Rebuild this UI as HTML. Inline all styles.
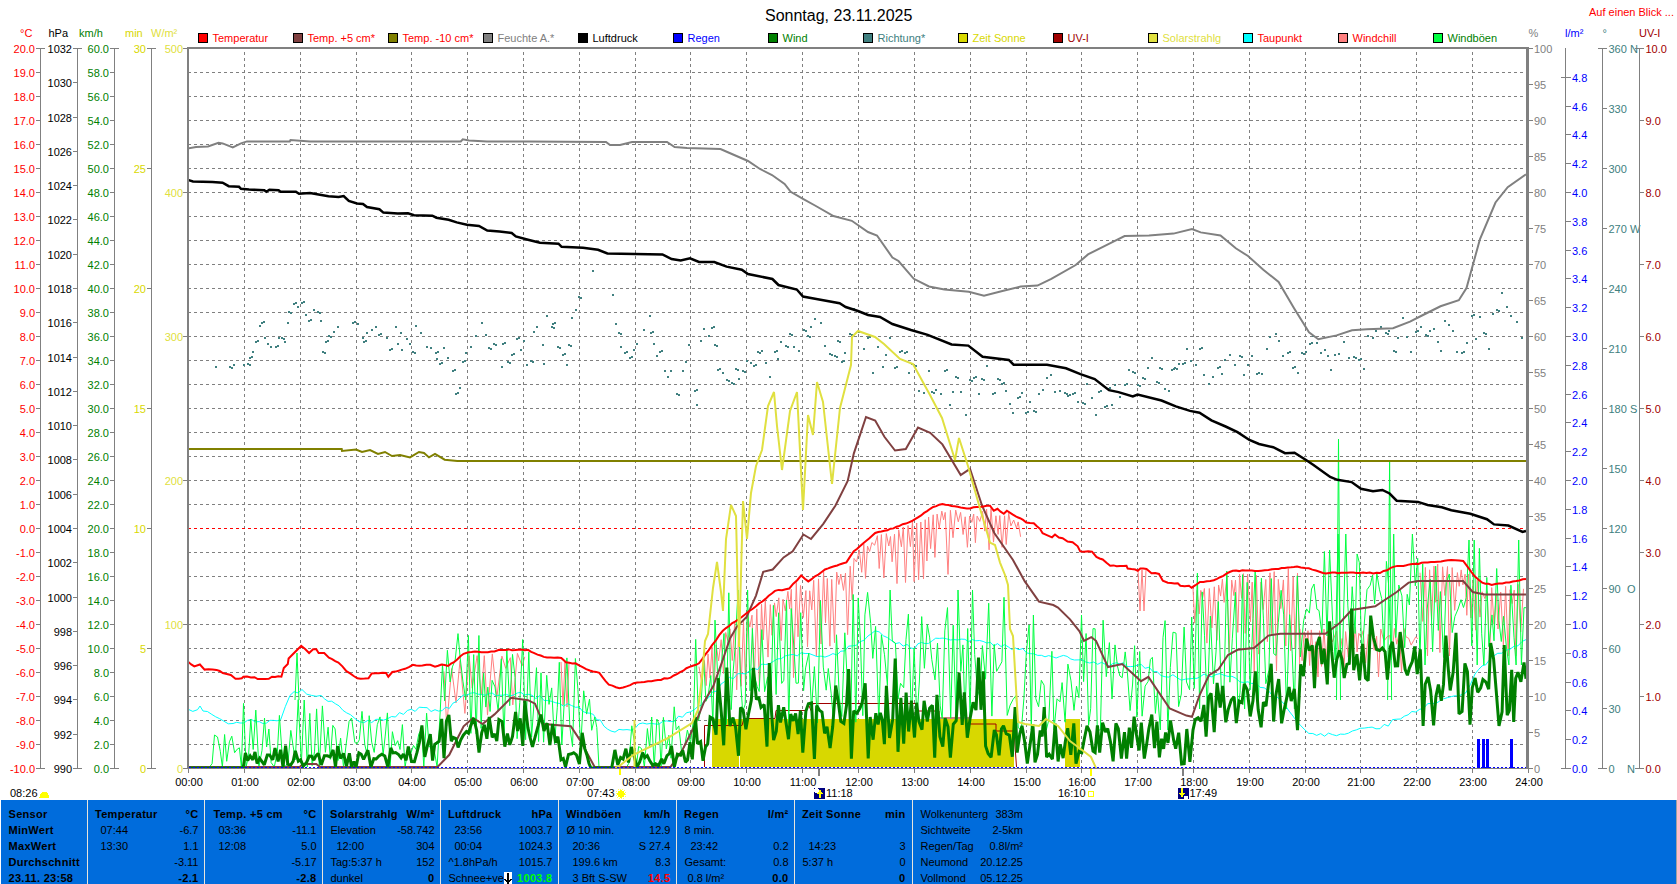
<!DOCTYPE html>
<html><head><meta charset="utf-8"><style>
html,body{margin:0;padding:0;background:#fff;width:1677px;height:884px;overflow:hidden}
svg{display:block}
text{font-family:"Liberation Sans",sans-serif;font-size:11px}
</style></head><body>
<svg width="1677" height="884" viewBox="0 0 1677 884" shape-rendering="crispEdges">
<g><text x="765" y="21" fill="#000" style="font-size:16px">Sonntag, 23.11.2025</text>
<text x="1589" y="16" fill="#FF0000">Auf einen Blick ...</text>
<rect x="198.5" y="33.5" width="9" height="9" fill="#FF0000" stroke="#000" stroke-width="1"/>
<text x="212.5" y="42" fill="#FF0000">Temperatur</text>
<rect x="293.5" y="33.5" width="9" height="9" fill="#804040" stroke="#000" stroke-width="1"/>
<text x="307.5" y="42" fill="#FF0000">Temp. +5 cm*</text>
<rect x="388.5" y="33.5" width="9" height="9" fill="#808000" stroke="#000" stroke-width="1"/>
<text x="402.5" y="42" fill="#FF0000">Temp. -10 cm*</text>
<rect x="483.5" y="33.5" width="9" height="9" fill="#808080" stroke="#000" stroke-width="1"/>
<text x="497.5" y="42" fill="#808080">Feuchte A.*</text>
<rect x="578.5" y="33.5" width="9" height="9" fill="#000000" stroke="#000" stroke-width="1"/>
<text x="592.5" y="42" fill="#000000">Luftdruck</text>
<rect x="673.5" y="33.5" width="9" height="9" fill="#0000FF" stroke="#000" stroke-width="1"/>
<text x="687.5" y="42" fill="#0000FF">Regen</text>
<rect x="768.5" y="33.5" width="9" height="9" fill="#008000" stroke="#000" stroke-width="1"/>
<text x="782.5" y="42" fill="#008000">Wind</text>
<rect x="863.5" y="33.5" width="9" height="9" fill="#408080" stroke="#000" stroke-width="1"/>
<text x="877.5" y="42" fill="#408080">Richtung*</text>
<rect x="958.5" y="33.5" width="9" height="9" fill="#D8D800" stroke="#000" stroke-width="1"/>
<text x="972.5" y="42" fill="#D8D800">Zeit Sonne</text>
<rect x="1053.5" y="33.5" width="9" height="9" fill="#A00000" stroke="#000" stroke-width="1"/>
<text x="1067.5" y="42" fill="#A00000">UV-I</text>
<rect x="1148.5" y="33.5" width="9" height="9" fill="#E0E040" stroke="#000" stroke-width="1"/>
<text x="1162.5" y="42" fill="#E0E040">Solarstrahlg</text>
<rect x="1243.5" y="33.5" width="9" height="9" fill="#00FFFF" stroke="#000" stroke-width="1"/>
<text x="1257.5" y="42" fill="#FF0000">Taupunkt</text>
<rect x="1338.5" y="33.5" width="9" height="9" fill="#FF8080" stroke="#000" stroke-width="1"/>
<text x="1352.5" y="42" fill="#FF0000">Windchill</text>
<rect x="1433.5" y="33.5" width="9" height="9" fill="#00FF40" stroke="#000" stroke-width="1"/>
<text x="1447.5" y="42" fill="#008000">Windböen</text>
<text x="20" y="37" fill="#FF0000">°C</text>
<text x="48.5" y="37" fill="#000">hPa</text>
<text x="79" y="37" fill="#008000">km/h</text>
<text x="125" y="37" fill="#D8D800">min</text>
<text x="151" y="37" fill="#E0E040">W/m²</text>
<text x="1528.5" y="37" fill="#808080">%</text>
<text x="1565" y="37" fill="#0000FF">l/m²</text>
<text x="1602.5" y="37" fill="#408080">°</text>
<text x="1639" y="37" fill="#A00000">UV-I</text>
<path d="M188 72.5H1526M188 96.5H1526M188 120.5H1526M188 144.5H1526M188 168.5H1526M188 192.5H1526M188 216.5H1526M188 240.5H1526M188 264.5H1526M188 288.5H1526M188 312.5H1526M188 336.5H1526M188 360.5H1526M188 384.5H1526M188 408.5H1526M188 432.5H1526M188 456.5H1526M188 480.5H1526M188 504.5H1526M188 528.5H1526M188 552.5H1526M188 576.5H1526M188 600.5H1526M188 624.5H1526M188 648.5H1526M188 672.5H1526M188 696.5H1526M188 720.5H1526M188 744.5H1526" stroke="#808080" stroke-width="1" stroke-dasharray="3 3" fill="none"/>
<path d="M244.5 52V767M300.5 52V767M356.5 52V767M411.5 52V767M467.5 52V767M523.5 52V767M579.5 52V767M635.5 52V767M690.5 52V767M746.5 52V767M802.5 52V767M858.5 52V767M914.5 52V767M970.5 52V767M1026.5 52V767M1081.5 52V767M1137.5 52V767M1193.5 52V767M1249.5 52V767M1305.5 52V767M1360.5 52V767M1416.5 52V767M1472.5 52V767" stroke="#808080" stroke-width="1" stroke-dasharray="3 3" fill="none"/>
<path d="M188 528.5H1526" stroke="#FF0000" stroke-width="1" stroke-dasharray="3 3" fill="none"/>
<line x1="40.5" y1="48" x2="40.5" y2="769" stroke="#808080" stroke-width="1"/>
<line x1="36" y1="48.5" x2="45" y2="48.5" stroke="#808080" stroke-width="1"/>
<text x="35" y="53" fill="#FF0000" text-anchor="end">20.0</text>
<line x1="36" y1="72.5" x2="41" y2="72.5" stroke="#808080" stroke-width="1"/>
<text x="35" y="77" fill="#FF0000" text-anchor="end">19.0</text>
<line x1="36" y1="96.5" x2="41" y2="96.5" stroke="#808080" stroke-width="1"/>
<text x="35" y="101" fill="#FF0000" text-anchor="end">18.0</text>
<line x1="36" y1="120.5" x2="41" y2="120.5" stroke="#808080" stroke-width="1"/>
<text x="35" y="125" fill="#FF0000" text-anchor="end">17.0</text>
<line x1="36" y1="144.5" x2="41" y2="144.5" stroke="#808080" stroke-width="1"/>
<text x="35" y="149" fill="#FF0000" text-anchor="end">16.0</text>
<line x1="36" y1="168.5" x2="41" y2="168.5" stroke="#808080" stroke-width="1"/>
<text x="35" y="173" fill="#FF0000" text-anchor="end">15.0</text>
<line x1="36" y1="192.5" x2="41" y2="192.5" stroke="#808080" stroke-width="1"/>
<text x="35" y="197" fill="#FF0000" text-anchor="end">14.0</text>
<line x1="36" y1="216.5" x2="41" y2="216.5" stroke="#808080" stroke-width="1"/>
<text x="35" y="221" fill="#FF0000" text-anchor="end">13.0</text>
<line x1="36" y1="240.5" x2="41" y2="240.5" stroke="#808080" stroke-width="1"/>
<text x="35" y="245" fill="#FF0000" text-anchor="end">12.0</text>
<line x1="36" y1="264.5" x2="41" y2="264.5" stroke="#808080" stroke-width="1"/>
<text x="35" y="269" fill="#FF0000" text-anchor="end">11.0</text>
<line x1="36" y1="288.5" x2="41" y2="288.5" stroke="#808080" stroke-width="1"/>
<text x="35" y="293" fill="#FF0000" text-anchor="end">10.0</text>
<line x1="36" y1="312.5" x2="41" y2="312.5" stroke="#808080" stroke-width="1"/>
<text x="35" y="317" fill="#FF0000" text-anchor="end">9.0</text>
<line x1="36" y1="336.5" x2="41" y2="336.5" stroke="#808080" stroke-width="1"/>
<text x="35" y="341" fill="#FF0000" text-anchor="end">8.0</text>
<line x1="36" y1="360.5" x2="41" y2="360.5" stroke="#808080" stroke-width="1"/>
<text x="35" y="365" fill="#FF0000" text-anchor="end">7.0</text>
<line x1="36" y1="384.5" x2="41" y2="384.5" stroke="#808080" stroke-width="1"/>
<text x="35" y="389" fill="#FF0000" text-anchor="end">6.0</text>
<line x1="36" y1="408.5" x2="41" y2="408.5" stroke="#808080" stroke-width="1"/>
<text x="35" y="413" fill="#FF0000" text-anchor="end">5.0</text>
<line x1="36" y1="432.5" x2="41" y2="432.5" stroke="#808080" stroke-width="1"/>
<text x="35" y="437" fill="#FF0000" text-anchor="end">4.0</text>
<line x1="36" y1="456.5" x2="41" y2="456.5" stroke="#808080" stroke-width="1"/>
<text x="35" y="461" fill="#FF0000" text-anchor="end">3.0</text>
<line x1="36" y1="480.5" x2="41" y2="480.5" stroke="#808080" stroke-width="1"/>
<text x="35" y="485" fill="#FF0000" text-anchor="end">2.0</text>
<line x1="36" y1="504.5" x2="41" y2="504.5" stroke="#808080" stroke-width="1"/>
<text x="35" y="509" fill="#FF0000" text-anchor="end">1.0</text>
<line x1="36" y1="528.5" x2="41" y2="528.5" stroke="#808080" stroke-width="1"/>
<text x="35" y="533" fill="#FF0000" text-anchor="end">0.0</text>
<line x1="36" y1="552.5" x2="41" y2="552.5" stroke="#808080" stroke-width="1"/>
<text x="35" y="557" fill="#FF0000" text-anchor="end">-1.0</text>
<line x1="36" y1="576.5" x2="41" y2="576.5" stroke="#808080" stroke-width="1"/>
<text x="35" y="581" fill="#FF0000" text-anchor="end">-2.0</text>
<line x1="36" y1="600.5" x2="41" y2="600.5" stroke="#808080" stroke-width="1"/>
<text x="35" y="605" fill="#FF0000" text-anchor="end">-3.0</text>
<line x1="36" y1="624.5" x2="41" y2="624.5" stroke="#808080" stroke-width="1"/>
<text x="35" y="629" fill="#FF0000" text-anchor="end">-4.0</text>
<line x1="36" y1="648.5" x2="41" y2="648.5" stroke="#808080" stroke-width="1"/>
<text x="35" y="653" fill="#FF0000" text-anchor="end">-5.0</text>
<line x1="36" y1="672.5" x2="41" y2="672.5" stroke="#808080" stroke-width="1"/>
<text x="35" y="677" fill="#FF0000" text-anchor="end">-6.0</text>
<line x1="36" y1="696.5" x2="41" y2="696.5" stroke="#808080" stroke-width="1"/>
<text x="35" y="701" fill="#FF0000" text-anchor="end">-7.0</text>
<line x1="36" y1="720.5" x2="41" y2="720.5" stroke="#808080" stroke-width="1"/>
<text x="35" y="725" fill="#FF0000" text-anchor="end">-8.0</text>
<line x1="36" y1="744.5" x2="41" y2="744.5" stroke="#808080" stroke-width="1"/>
<text x="35" y="749" fill="#FF0000" text-anchor="end">-9.0</text>
<line x1="36" y1="768.5" x2="45" y2="768.5" stroke="#808080" stroke-width="1"/>
<text x="35" y="773" fill="#FF0000" text-anchor="end">-10.0</text>
<line x1="77.5" y1="48" x2="77.5" y2="769" stroke="#808080" stroke-width="1"/>
<line x1="73" y1="48.5" x2="82" y2="48.5" stroke="#808080" stroke-width="1"/>
<text x="72" y="53" fill="#000000" text-anchor="end">1032</text>
<line x1="73" y1="82.5" x2="78" y2="82.5" stroke="#808080" stroke-width="1"/>
<text x="72" y="87" fill="#000000" text-anchor="end">1030</text>
<line x1="73" y1="117.5" x2="78" y2="117.5" stroke="#808080" stroke-width="1"/>
<text x="72" y="122" fill="#000000" text-anchor="end">1028</text>
<line x1="73" y1="151.5" x2="78" y2="151.5" stroke="#808080" stroke-width="1"/>
<text x="72" y="156" fill="#000000" text-anchor="end">1026</text>
<line x1="73" y1="185.5" x2="78" y2="185.5" stroke="#808080" stroke-width="1"/>
<text x="72" y="190" fill="#000000" text-anchor="end">1024</text>
<line x1="73" y1="219.5" x2="78" y2="219.5" stroke="#808080" stroke-width="1"/>
<text x="72" y="224" fill="#000000" text-anchor="end">1022</text>
<line x1="73" y1="254.5" x2="78" y2="254.5" stroke="#808080" stroke-width="1"/>
<text x="72" y="259" fill="#000000" text-anchor="end">1020</text>
<line x1="73" y1="288.5" x2="78" y2="288.5" stroke="#808080" stroke-width="1"/>
<text x="72" y="293" fill="#000000" text-anchor="end">1018</text>
<line x1="73" y1="322.5" x2="78" y2="322.5" stroke="#808080" stroke-width="1"/>
<text x="72" y="327" fill="#000000" text-anchor="end">1016</text>
<line x1="73" y1="357.5" x2="78" y2="357.5" stroke="#808080" stroke-width="1"/>
<text x="72" y="362" fill="#000000" text-anchor="end">1014</text>
<line x1="73" y1="391.5" x2="78" y2="391.5" stroke="#808080" stroke-width="1"/>
<text x="72" y="396" fill="#000000" text-anchor="end">1012</text>
<line x1="73" y1="425.5" x2="78" y2="425.5" stroke="#808080" stroke-width="1"/>
<text x="72" y="430" fill="#000000" text-anchor="end">1010</text>
<line x1="73" y1="459.5" x2="78" y2="459.5" stroke="#808080" stroke-width="1"/>
<text x="72" y="464" fill="#000000" text-anchor="end">1008</text>
<line x1="73" y1="494.5" x2="78" y2="494.5" stroke="#808080" stroke-width="1"/>
<text x="72" y="499" fill="#000000" text-anchor="end">1006</text>
<line x1="73" y1="528.5" x2="78" y2="528.5" stroke="#808080" stroke-width="1"/>
<text x="72" y="533" fill="#000000" text-anchor="end">1004</text>
<line x1="73" y1="562.5" x2="78" y2="562.5" stroke="#808080" stroke-width="1"/>
<text x="72" y="567" fill="#000000" text-anchor="end">1002</text>
<line x1="73" y1="597.5" x2="78" y2="597.5" stroke="#808080" stroke-width="1"/>
<text x="72" y="602" fill="#000000" text-anchor="end">1000</text>
<line x1="73" y1="631.5" x2="78" y2="631.5" stroke="#808080" stroke-width="1"/>
<text x="72" y="636" fill="#000000" text-anchor="end">998</text>
<line x1="73" y1="665.5" x2="78" y2="665.5" stroke="#808080" stroke-width="1"/>
<text x="72" y="670" fill="#000000" text-anchor="end">996</text>
<line x1="73" y1="699.5" x2="78" y2="699.5" stroke="#808080" stroke-width="1"/>
<text x="72" y="704" fill="#000000" text-anchor="end">994</text>
<line x1="73" y1="734.5" x2="78" y2="734.5" stroke="#808080" stroke-width="1"/>
<text x="72" y="739" fill="#000000" text-anchor="end">992</text>
<line x1="73" y1="768.5" x2="82" y2="768.5" stroke="#808080" stroke-width="1"/>
<text x="72" y="773" fill="#000000" text-anchor="end">990</text>
<line x1="114.5" y1="48" x2="114.5" y2="769" stroke="#808080" stroke-width="1"/>
<line x1="110" y1="48.5" x2="119" y2="48.5" stroke="#808080" stroke-width="1"/>
<text x="109" y="53" fill="#008000" text-anchor="end">60.0</text>
<line x1="110" y1="72.5" x2="115" y2="72.5" stroke="#808080" stroke-width="1"/>
<text x="109" y="77" fill="#008000" text-anchor="end">58.0</text>
<line x1="110" y1="96.5" x2="115" y2="96.5" stroke="#808080" stroke-width="1"/>
<text x="109" y="101" fill="#008000" text-anchor="end">56.0</text>
<line x1="110" y1="120.5" x2="115" y2="120.5" stroke="#808080" stroke-width="1"/>
<text x="109" y="125" fill="#008000" text-anchor="end">54.0</text>
<line x1="110" y1="144.5" x2="115" y2="144.5" stroke="#808080" stroke-width="1"/>
<text x="109" y="149" fill="#008000" text-anchor="end">52.0</text>
<line x1="110" y1="168.5" x2="115" y2="168.5" stroke="#808080" stroke-width="1"/>
<text x="109" y="173" fill="#008000" text-anchor="end">50.0</text>
<line x1="110" y1="192.5" x2="115" y2="192.5" stroke="#808080" stroke-width="1"/>
<text x="109" y="197" fill="#008000" text-anchor="end">48.0</text>
<line x1="110" y1="216.5" x2="115" y2="216.5" stroke="#808080" stroke-width="1"/>
<text x="109" y="221" fill="#008000" text-anchor="end">46.0</text>
<line x1="110" y1="240.5" x2="115" y2="240.5" stroke="#808080" stroke-width="1"/>
<text x="109" y="245" fill="#008000" text-anchor="end">44.0</text>
<line x1="110" y1="264.5" x2="115" y2="264.5" stroke="#808080" stroke-width="1"/>
<text x="109" y="269" fill="#008000" text-anchor="end">42.0</text>
<line x1="110" y1="288.5" x2="115" y2="288.5" stroke="#808080" stroke-width="1"/>
<text x="109" y="293" fill="#008000" text-anchor="end">40.0</text>
<line x1="110" y1="312.5" x2="115" y2="312.5" stroke="#808080" stroke-width="1"/>
<text x="109" y="317" fill="#008000" text-anchor="end">38.0</text>
<line x1="110" y1="336.5" x2="115" y2="336.5" stroke="#808080" stroke-width="1"/>
<text x="109" y="341" fill="#008000" text-anchor="end">36.0</text>
<line x1="110" y1="360.5" x2="115" y2="360.5" stroke="#808080" stroke-width="1"/>
<text x="109" y="365" fill="#008000" text-anchor="end">34.0</text>
<line x1="110" y1="384.5" x2="115" y2="384.5" stroke="#808080" stroke-width="1"/>
<text x="109" y="389" fill="#008000" text-anchor="end">32.0</text>
<line x1="110" y1="408.5" x2="115" y2="408.5" stroke="#808080" stroke-width="1"/>
<text x="109" y="413" fill="#008000" text-anchor="end">30.0</text>
<line x1="110" y1="432.5" x2="115" y2="432.5" stroke="#808080" stroke-width="1"/>
<text x="109" y="437" fill="#008000" text-anchor="end">28.0</text>
<line x1="110" y1="456.5" x2="115" y2="456.5" stroke="#808080" stroke-width="1"/>
<text x="109" y="461" fill="#008000" text-anchor="end">26.0</text>
<line x1="110" y1="480.5" x2="115" y2="480.5" stroke="#808080" stroke-width="1"/>
<text x="109" y="485" fill="#008000" text-anchor="end">24.0</text>
<line x1="110" y1="504.5" x2="115" y2="504.5" stroke="#808080" stroke-width="1"/>
<text x="109" y="509" fill="#008000" text-anchor="end">22.0</text>
<line x1="110" y1="528.5" x2="115" y2="528.5" stroke="#808080" stroke-width="1"/>
<text x="109" y="533" fill="#008000" text-anchor="end">20.0</text>
<line x1="110" y1="552.5" x2="115" y2="552.5" stroke="#808080" stroke-width="1"/>
<text x="109" y="557" fill="#008000" text-anchor="end">18.0</text>
<line x1="110" y1="576.5" x2="115" y2="576.5" stroke="#808080" stroke-width="1"/>
<text x="109" y="581" fill="#008000" text-anchor="end">16.0</text>
<line x1="110" y1="600.5" x2="115" y2="600.5" stroke="#808080" stroke-width="1"/>
<text x="109" y="605" fill="#008000" text-anchor="end">14.0</text>
<line x1="110" y1="624.5" x2="115" y2="624.5" stroke="#808080" stroke-width="1"/>
<text x="109" y="629" fill="#008000" text-anchor="end">12.0</text>
<line x1="110" y1="648.5" x2="115" y2="648.5" stroke="#808080" stroke-width="1"/>
<text x="109" y="653" fill="#008000" text-anchor="end">10.0</text>
<line x1="110" y1="672.5" x2="115" y2="672.5" stroke="#808080" stroke-width="1"/>
<text x="109" y="677" fill="#008000" text-anchor="end">8.0</text>
<line x1="110" y1="696.5" x2="115" y2="696.5" stroke="#808080" stroke-width="1"/>
<text x="109" y="701" fill="#008000" text-anchor="end">6.0</text>
<line x1="110" y1="720.5" x2="115" y2="720.5" stroke="#808080" stroke-width="1"/>
<text x="109" y="725" fill="#008000" text-anchor="end">4.0</text>
<line x1="110" y1="744.5" x2="115" y2="744.5" stroke="#808080" stroke-width="1"/>
<text x="109" y="749" fill="#008000" text-anchor="end">2.0</text>
<line x1="110" y1="768.5" x2="119" y2="768.5" stroke="#808080" stroke-width="1"/>
<text x="109" y="773" fill="#008000" text-anchor="end">0.0</text>
<line x1="151.5" y1="48" x2="151.5" y2="769" stroke="#808080" stroke-width="1"/>
<line x1="147" y1="48.5" x2="156" y2="48.5" stroke="#808080" stroke-width="1"/>
<text x="146" y="53" fill="#D8D800" text-anchor="end">30</text>
<line x1="147" y1="168.5" x2="152" y2="168.5" stroke="#808080" stroke-width="1"/>
<text x="146" y="173" fill="#D8D800" text-anchor="end">25</text>
<line x1="147" y1="288.5" x2="152" y2="288.5" stroke="#808080" stroke-width="1"/>
<text x="146" y="293" fill="#D8D800" text-anchor="end">20</text>
<line x1="147" y1="408.5" x2="152" y2="408.5" stroke="#808080" stroke-width="1"/>
<text x="146" y="413" fill="#D8D800" text-anchor="end">15</text>
<line x1="147" y1="528.5" x2="152" y2="528.5" stroke="#808080" stroke-width="1"/>
<text x="146" y="533" fill="#D8D800" text-anchor="end">10</text>
<line x1="147" y1="648.5" x2="152" y2="648.5" stroke="#808080" stroke-width="1"/>
<text x="146" y="653" fill="#D8D800" text-anchor="end">5</text>
<line x1="147" y1="768.5" x2="156" y2="768.5" stroke="#808080" stroke-width="1"/>
<text x="146" y="773" fill="#D8D800" text-anchor="end">0</text>
<line x1="183" y1="48.5" x2="187" y2="48.5" stroke="#808080" stroke-width="1"/>
<text x="183" y="53" fill="#E0E040" text-anchor="end">500</text>
<line x1="183" y1="192.5" x2="187" y2="192.5" stroke="#808080" stroke-width="1"/>
<text x="183" y="197" fill="#E0E040" text-anchor="end">400</text>
<line x1="183" y1="336.5" x2="187" y2="336.5" stroke="#808080" stroke-width="1"/>
<text x="183" y="341" fill="#E0E040" text-anchor="end">300</text>
<line x1="183" y1="480.5" x2="187" y2="480.5" stroke="#808080" stroke-width="1"/>
<text x="183" y="485" fill="#E0E040" text-anchor="end">200</text>
<line x1="183" y1="624.5" x2="187" y2="624.5" stroke="#808080" stroke-width="1"/>
<text x="183" y="629" fill="#E0E040" text-anchor="end">100</text>
<line x1="183" y1="768.5" x2="187" y2="768.5" stroke="#808080" stroke-width="1"/>
<text x="183" y="773" fill="#E0E040" text-anchor="end">0</text>
<rect x="187" y="47" width="2" height="722" fill="#808080"/>
<rect x="187" y="47" width="1341" height="2" fill="#808080"/>
<rect x="1526" y="47" width="3" height="722" fill="#808080"/>
<rect x="187" y="768" width="1342" height="1" fill="#808080"/>
<line x1="1529" y1="48.5" x2="1533" y2="48.5" stroke="#808080" stroke-width="1"/>
<text x="1534" y="53" fill="#808080">100</text>
<line x1="1529" y1="84.5" x2="1533" y2="84.5" stroke="#808080" stroke-width="1"/>
<text x="1534" y="89" fill="#808080">95</text>
<line x1="1529" y1="120.5" x2="1533" y2="120.5" stroke="#808080" stroke-width="1"/>
<text x="1534" y="125" fill="#808080">90</text>
<line x1="1529" y1="156.5" x2="1533" y2="156.5" stroke="#808080" stroke-width="1"/>
<text x="1534" y="161" fill="#808080">85</text>
<line x1="1529" y1="192.5" x2="1533" y2="192.5" stroke="#808080" stroke-width="1"/>
<text x="1534" y="197" fill="#808080">80</text>
<line x1="1529" y1="228.5" x2="1533" y2="228.5" stroke="#808080" stroke-width="1"/>
<text x="1534" y="233" fill="#808080">75</text>
<line x1="1529" y1="264.5" x2="1533" y2="264.5" stroke="#808080" stroke-width="1"/>
<text x="1534" y="269" fill="#808080">70</text>
<line x1="1529" y1="300.5" x2="1533" y2="300.5" stroke="#808080" stroke-width="1"/>
<text x="1534" y="305" fill="#808080">65</text>
<line x1="1529" y1="336.5" x2="1533" y2="336.5" stroke="#808080" stroke-width="1"/>
<text x="1534" y="341" fill="#808080">60</text>
<line x1="1529" y1="372.5" x2="1533" y2="372.5" stroke="#808080" stroke-width="1"/>
<text x="1534" y="377" fill="#808080">55</text>
<line x1="1529" y1="408.5" x2="1533" y2="408.5" stroke="#808080" stroke-width="1"/>
<text x="1534" y="413" fill="#808080">50</text>
<line x1="1529" y1="444.5" x2="1533" y2="444.5" stroke="#808080" stroke-width="1"/>
<text x="1534" y="449" fill="#808080">45</text>
<line x1="1529" y1="480.5" x2="1533" y2="480.5" stroke="#808080" stroke-width="1"/>
<text x="1534" y="485" fill="#808080">40</text>
<line x1="1529" y1="516.5" x2="1533" y2="516.5" stroke="#808080" stroke-width="1"/>
<text x="1534" y="521" fill="#808080">35</text>
<line x1="1529" y1="552.5" x2="1533" y2="552.5" stroke="#808080" stroke-width="1"/>
<text x="1534" y="557" fill="#808080">30</text>
<line x1="1529" y1="588.5" x2="1533" y2="588.5" stroke="#808080" stroke-width="1"/>
<text x="1534" y="593" fill="#808080">25</text>
<line x1="1529" y1="624.5" x2="1533" y2="624.5" stroke="#808080" stroke-width="1"/>
<text x="1534" y="629" fill="#808080">20</text>
<line x1="1529" y1="660.5" x2="1533" y2="660.5" stroke="#808080" stroke-width="1"/>
<text x="1534" y="665" fill="#808080">15</text>
<line x1="1529" y1="696.5" x2="1533" y2="696.5" stroke="#808080" stroke-width="1"/>
<text x="1534" y="701" fill="#808080">10</text>
<line x1="1529" y1="732.5" x2="1533" y2="732.5" stroke="#808080" stroke-width="1"/>
<text x="1534" y="737" fill="#808080">5</text>
<line x1="1529" y1="768.5" x2="1533" y2="768.5" stroke="#808080" stroke-width="1"/>
<text x="1534" y="773" fill="#808080">0</text>
<line x1="1565.5" y1="48" x2="1565.5" y2="769" stroke="#808080" stroke-width="1"/>
<line x1="1561" y1="77.5" x2="1571" y2="77.5" stroke="#808080" stroke-width="1"/>
<text x="1572" y="82" fill="#0000FF">4.8</text>
<line x1="1565" y1="106.5" x2="1571" y2="106.5" stroke="#808080" stroke-width="1"/>
<text x="1572" y="111" fill="#0000FF">4.6</text>
<line x1="1565" y1="134.5" x2="1571" y2="134.5" stroke="#808080" stroke-width="1"/>
<text x="1572" y="139" fill="#0000FF">4.4</text>
<line x1="1565" y1="163.5" x2="1571" y2="163.5" stroke="#808080" stroke-width="1"/>
<text x="1572" y="168" fill="#0000FF">4.2</text>
<line x1="1565" y1="192.5" x2="1571" y2="192.5" stroke="#808080" stroke-width="1"/>
<text x="1572" y="197" fill="#0000FF">4.0</text>
<line x1="1565" y1="221.5" x2="1571" y2="221.5" stroke="#808080" stroke-width="1"/>
<text x="1572" y="226" fill="#0000FF">3.8</text>
<line x1="1565" y1="250.5" x2="1571" y2="250.5" stroke="#808080" stroke-width="1"/>
<text x="1572" y="255" fill="#0000FF">3.6</text>
<line x1="1565" y1="278.5" x2="1571" y2="278.5" stroke="#808080" stroke-width="1"/>
<text x="1572" y="283" fill="#0000FF">3.4</text>
<line x1="1565" y1="307.5" x2="1571" y2="307.5" stroke="#808080" stroke-width="1"/>
<text x="1572" y="312" fill="#0000FF">3.2</text>
<line x1="1565" y1="336.5" x2="1571" y2="336.5" stroke="#808080" stroke-width="1"/>
<text x="1572" y="341" fill="#0000FF">3.0</text>
<line x1="1565" y1="365.5" x2="1571" y2="365.5" stroke="#808080" stroke-width="1"/>
<text x="1572" y="370" fill="#0000FF">2.8</text>
<line x1="1565" y1="394.5" x2="1571" y2="394.5" stroke="#808080" stroke-width="1"/>
<text x="1572" y="399" fill="#0000FF">2.6</text>
<line x1="1565" y1="422.5" x2="1571" y2="422.5" stroke="#808080" stroke-width="1"/>
<text x="1572" y="427" fill="#0000FF">2.4</text>
<line x1="1565" y1="451.5" x2="1571" y2="451.5" stroke="#808080" stroke-width="1"/>
<text x="1572" y="456" fill="#0000FF">2.2</text>
<line x1="1565" y1="480.5" x2="1571" y2="480.5" stroke="#808080" stroke-width="1"/>
<text x="1572" y="485" fill="#0000FF">2.0</text>
<line x1="1565" y1="509.5" x2="1571" y2="509.5" stroke="#808080" stroke-width="1"/>
<text x="1572" y="514" fill="#0000FF">1.8</text>
<line x1="1565" y1="538.5" x2="1571" y2="538.5" stroke="#808080" stroke-width="1"/>
<text x="1572" y="543" fill="#0000FF">1.6</text>
<line x1="1565" y1="566.5" x2="1571" y2="566.5" stroke="#808080" stroke-width="1"/>
<text x="1572" y="571" fill="#0000FF">1.4</text>
<line x1="1565" y1="595.5" x2="1571" y2="595.5" stroke="#808080" stroke-width="1"/>
<text x="1572" y="600" fill="#0000FF">1.2</text>
<line x1="1565" y1="624.5" x2="1571" y2="624.5" stroke="#808080" stroke-width="1"/>
<text x="1572" y="629" fill="#0000FF">1.0</text>
<line x1="1565" y1="653.5" x2="1571" y2="653.5" stroke="#808080" stroke-width="1"/>
<text x="1572" y="658" fill="#0000FF">0.8</text>
<line x1="1565" y1="682.5" x2="1571" y2="682.5" stroke="#808080" stroke-width="1"/>
<text x="1572" y="687" fill="#0000FF">0.6</text>
<line x1="1565" y1="710.5" x2="1571" y2="710.5" stroke="#808080" stroke-width="1"/>
<text x="1572" y="715" fill="#0000FF">0.4</text>
<line x1="1565" y1="739.5" x2="1571" y2="739.5" stroke="#808080" stroke-width="1"/>
<text x="1572" y="744" fill="#0000FF">0.2</text>
<line x1="1561" y1="768.5" x2="1571" y2="768.5" stroke="#808080" stroke-width="1"/>
<text x="1572" y="773" fill="#0000FF">0.0</text>
<line x1="1602.5" y1="48" x2="1602.5" y2="769" stroke="#808080" stroke-width="1"/>
<line x1="1598" y1="48.5" x2="1607" y2="48.5" stroke="#808080" stroke-width="1"/>
<text x="1608.5" y="53" fill="#408080">360 N</text>
<line x1="1602" y1="108.5" x2="1607" y2="108.5" stroke="#808080" stroke-width="1"/>
<text x="1608.5" y="113" fill="#408080">330</text>
<line x1="1602" y1="168.5" x2="1607" y2="168.5" stroke="#808080" stroke-width="1"/>
<text x="1608.5" y="173" fill="#408080">300</text>
<line x1="1602" y1="228.5" x2="1607" y2="228.5" stroke="#808080" stroke-width="1"/>
<text x="1608.5" y="233" fill="#408080">270 W</text>
<line x1="1602" y1="288.5" x2="1607" y2="288.5" stroke="#808080" stroke-width="1"/>
<text x="1608.5" y="293" fill="#408080">240</text>
<line x1="1602" y1="348.5" x2="1607" y2="348.5" stroke="#808080" stroke-width="1"/>
<text x="1608.5" y="353" fill="#408080">210</text>
<line x1="1602" y1="408.5" x2="1607" y2="408.5" stroke="#808080" stroke-width="1"/>
<text x="1608.5" y="413" fill="#408080">180 S</text>
<line x1="1602" y1="468.5" x2="1607" y2="468.5" stroke="#808080" stroke-width="1"/>
<text x="1608.5" y="473" fill="#408080">150</text>
<line x1="1602" y1="528.5" x2="1607" y2="528.5" stroke="#808080" stroke-width="1"/>
<text x="1608.5" y="533" fill="#408080">120</text>
<line x1="1602" y1="588.5" x2="1607" y2="588.5" stroke="#808080" stroke-width="1"/>
<text x="1608.5" y="593" fill="#408080">90</text>
<line x1="1602" y1="648.5" x2="1607" y2="648.5" stroke="#808080" stroke-width="1"/>
<text x="1608.5" y="653" fill="#408080">60</text>
<line x1="1602" y1="708.5" x2="1607" y2="708.5" stroke="#808080" stroke-width="1"/>
<text x="1608.5" y="713" fill="#408080">30</text>
<line x1="1598" y1="768.5" x2="1607" y2="768.5" stroke="#808080" stroke-width="1"/>
<text x="1608.5" y="773" fill="#408080">0</text>
<text x="1627" y="773" fill="#408080">N</text>
<text x="1627" y="593" fill="#408080">O</text>
<line x1="1639.5" y1="48" x2="1639.5" y2="769" stroke="#808080" stroke-width="1"/>
<line x1="1635" y1="48.5" x2="1644" y2="48.5" stroke="#808080" stroke-width="1"/>
<text x="1645.5" y="53" fill="#A00000">10.0</text>
<line x1="1639" y1="120.5" x2="1644" y2="120.5" stroke="#808080" stroke-width="1"/>
<text x="1645.5" y="125" fill="#A00000">9.0</text>
<line x1="1639" y1="192.5" x2="1644" y2="192.5" stroke="#808080" stroke-width="1"/>
<text x="1645.5" y="197" fill="#A00000">8.0</text>
<line x1="1639" y1="264.5" x2="1644" y2="264.5" stroke="#808080" stroke-width="1"/>
<text x="1645.5" y="269" fill="#A00000">7.0</text>
<line x1="1639" y1="336.5" x2="1644" y2="336.5" stroke="#808080" stroke-width="1"/>
<text x="1645.5" y="341" fill="#A00000">6.0</text>
<line x1="1639" y1="408.5" x2="1644" y2="408.5" stroke="#808080" stroke-width="1"/>
<text x="1645.5" y="413" fill="#A00000">5.0</text>
<line x1="1639" y1="480.5" x2="1644" y2="480.5" stroke="#808080" stroke-width="1"/>
<text x="1645.5" y="485" fill="#A00000">4.0</text>
<line x1="1639" y1="552.5" x2="1644" y2="552.5" stroke="#808080" stroke-width="1"/>
<text x="1645.5" y="557" fill="#A00000">3.0</text>
<line x1="1639" y1="624.5" x2="1644" y2="624.5" stroke="#808080" stroke-width="1"/>
<text x="1645.5" y="629" fill="#A00000">2.0</text>
<line x1="1639" y1="696.5" x2="1644" y2="696.5" stroke="#808080" stroke-width="1"/>
<text x="1645.5" y="701" fill="#A00000">1.0</text>
<line x1="1635" y1="768.5" x2="1644" y2="768.5" stroke="#808080" stroke-width="1"/>
<text x="1645.5" y="773" fill="#A00000">0.0</text>
<line x1="188.5" y1="769" x2="188.5" y2="773" stroke="#808080" stroke-width="1"/>
<text x="189" y="786" fill="#000" text-anchor="middle">00:00</text>
<line x1="244.5" y1="769" x2="244.5" y2="773" stroke="#808080" stroke-width="1"/>
<text x="245" y="786" fill="#000" text-anchor="middle">01:00</text>
<line x1="300.5" y1="769" x2="300.5" y2="773" stroke="#808080" stroke-width="1"/>
<text x="301" y="786" fill="#000" text-anchor="middle">02:00</text>
<line x1="356.5" y1="769" x2="356.5" y2="773" stroke="#808080" stroke-width="1"/>
<text x="357" y="786" fill="#000" text-anchor="middle">03:00</text>
<line x1="411.5" y1="769" x2="411.5" y2="773" stroke="#808080" stroke-width="1"/>
<text x="412" y="786" fill="#000" text-anchor="middle">04:00</text>
<line x1="467.5" y1="769" x2="467.5" y2="773" stroke="#808080" stroke-width="1"/>
<text x="468" y="786" fill="#000" text-anchor="middle">05:00</text>
<line x1="523.5" y1="769" x2="523.5" y2="773" stroke="#808080" stroke-width="1"/>
<text x="524" y="786" fill="#000" text-anchor="middle">06:00</text>
<line x1="579.5" y1="769" x2="579.5" y2="773" stroke="#808080" stroke-width="1"/>
<text x="580" y="786" fill="#000" text-anchor="middle">07:00</text>
<line x1="635.5" y1="769" x2="635.5" y2="773" stroke="#808080" stroke-width="1"/>
<text x="636" y="786" fill="#000" text-anchor="middle">08:00</text>
<line x1="690.5" y1="769" x2="690.5" y2="773" stroke="#808080" stroke-width="1"/>
<text x="691" y="786" fill="#000" text-anchor="middle">09:00</text>
<line x1="746.5" y1="769" x2="746.5" y2="773" stroke="#808080" stroke-width="1"/>
<text x="747" y="786" fill="#000" text-anchor="middle">10:00</text>
<line x1="802.5" y1="769" x2="802.5" y2="773" stroke="#808080" stroke-width="1"/>
<text x="803" y="786" fill="#000" text-anchor="middle">11:00</text>
<line x1="858.5" y1="769" x2="858.5" y2="773" stroke="#808080" stroke-width="1"/>
<text x="859" y="786" fill="#000" text-anchor="middle">12:00</text>
<line x1="914.5" y1="769" x2="914.5" y2="773" stroke="#808080" stroke-width="1"/>
<text x="915" y="786" fill="#000" text-anchor="middle">13:00</text>
<line x1="970.5" y1="769" x2="970.5" y2="773" stroke="#808080" stroke-width="1"/>
<text x="971" y="786" fill="#000" text-anchor="middle">14:00</text>
<line x1="1026.5" y1="769" x2="1026.5" y2="773" stroke="#808080" stroke-width="1"/>
<text x="1027" y="786" fill="#000" text-anchor="middle">15:00</text>
<line x1="1081.5" y1="769" x2="1081.5" y2="773" stroke="#808080" stroke-width="1"/>
<text x="1082" y="786" fill="#000" text-anchor="middle">16:00</text>
<line x1="1137.5" y1="769" x2="1137.5" y2="773" stroke="#808080" stroke-width="1"/>
<text x="1138" y="786" fill="#000" text-anchor="middle">17:00</text>
<line x1="1193.5" y1="769" x2="1193.5" y2="773" stroke="#808080" stroke-width="1"/>
<text x="1194" y="786" fill="#000" text-anchor="middle">18:00</text>
<line x1="1249.5" y1="769" x2="1249.5" y2="773" stroke="#808080" stroke-width="1"/>
<text x="1250" y="786" fill="#000" text-anchor="middle">19:00</text>
<line x1="1305.5" y1="769" x2="1305.5" y2="773" stroke="#808080" stroke-width="1"/>
<text x="1306" y="786" fill="#000" text-anchor="middle">20:00</text>
<line x1="1360.5" y1="769" x2="1360.5" y2="773" stroke="#808080" stroke-width="1"/>
<text x="1361" y="786" fill="#000" text-anchor="middle">21:00</text>
<line x1="1416.5" y1="769" x2="1416.5" y2="773" stroke="#808080" stroke-width="1"/>
<text x="1417" y="786" fill="#000" text-anchor="middle">22:00</text>
<line x1="1472.5" y1="769" x2="1472.5" y2="773" stroke="#808080" stroke-width="1"/>
<text x="1473" y="786" fill="#000" text-anchor="middle">23:00</text>
<line x1="1528.5" y1="769" x2="1528.5" y2="773" stroke="#808080" stroke-width="1"/>
<text x="1529" y="786" fill="#000" text-anchor="middle">24:00</text></g>
<defs><clipPath id="pc"><rect x="189" y="49" width="1337" height="719"/></clipPath></defs><g shape-rendering="auto" clip-path="url(#pc)"><path d="M712 719h27v48h-27zM740 719h274v48h-274zM1065 719h15v48h-15z" fill="#D8D800"/>
<polyline points="704.5,767.0 704.5,725.5 742.0,725.5 744.0,718.5 775.0,718.5 776.0,710.5 806.5,710.5 808.0,703.5 811.0,710.5 813.0,703.5 916.7,703.5 916.7,711.0 939.0,711.0 939.0,718.0 970.0,718.0 970.0,724.0 996.0,724.0 996.0,731.0 1014.0,731.0 1016.5,767.0" fill="none" stroke="#A00000" stroke-width="1" stroke-linejoin="miter" stroke-miterlimit="2"/>
<path d="M215 366h2v2h-2zM229 366h2v2h-2zM231 367h2v2h-2zM233 364h2v2h-2zM243 364h2v2h-2zM247 363h2v2h-2zM249 364h2v2h-2zM249 357h2v2h-2zM251 356h2v2h-2zM252 351h2v2h-2zM255 341h2v2h-2zM257 340h2v2h-2zM259 325h2v2h-2zM261 322h2v2h-2zM263 321h2v2h-2zM264 337h2v2h-2zM267 343h2v2h-2zM270 346h2v2h-2zM275 346h2v2h-2zM277 345h2v2h-2zM278 337h2v2h-2zM281 337h2v2h-2zM283 338h2v2h-2zM284 341h2v2h-2zM287 322h2v2h-2zM288 311h2v2h-2zM290 312h2v2h-2zM293 303h2v2h-2zM295 302h2v2h-2zM297 306h2v2h-2zM301 302h2v2h-2zM303 301h2v2h-2zM305 314h2v2h-2zM308 320h2v2h-2zM310 319h2v2h-2zM313 309h2v2h-2zM317 311h2v2h-2zM319 312h2v2h-2zM320 320h2v2h-2zM322 351h2v2h-2zM324 352h2v2h-2zM325 341h2v2h-2zM327 340h2v2h-2zM328 335h2v2h-2zM330 336h2v2h-2zM333 331h2v2h-2zM337 326h2v2h-2zM352 322h2v2h-2zM354 321h2v2h-2zM357 323h2v2h-2zM362 337h2v2h-2zM363 341h2v2h-2zM365 340h2v2h-2zM366 332h2v2h-2zM371 329h2v2h-2zM375 326h2v2h-2zM378 334h2v2h-2zM380 333h2v2h-2zM386 337h2v2h-2zM389 349h2v2h-2zM391 348h2v2h-2zM395 326h2v2h-2zM397 343h2v2h-2zM400 332h2v2h-2zM401 349h2v2h-2zM406 338h2v2h-2zM409 343h2v2h-2zM412 351h2v2h-2zM414 352h2v2h-2zM415 325h2v2h-2zM420 332h2v2h-2zM426 346h2v2h-2zM430 347h2v2h-2zM435 352h2v2h-2zM437 351h2v2h-2zM436 358h2v2h-2zM439 363h2v2h-2zM441 362h2v2h-2zM443 347h2v2h-2zM447 357h2v2h-2zM452 370h2v2h-2zM454 369h2v2h-2zM455 393h2v2h-2zM457 392h2v2h-2zM459 387h2v2h-2zM462 361h2v2h-2zM464 360h2v2h-2zM465 352h2v2h-2zM470 346h2v2h-2zM475 335h2v2h-2zM481 322h2v2h-2zM485 334h2v2h-2zM488 347h2v2h-2zM490 348h2v2h-2zM493 343h2v2h-2zM495 344h2v2h-2zM501 366h2v2h-2zM502 343h2v2h-2zM504 342h2v2h-2zM507 361h2v2h-2zM509 362h2v2h-2zM511 354h2v2h-2zM513 353h2v2h-2zM516 338h2v2h-2zM518 337h2v2h-2zM520 349h2v2h-2zM523 340h2v2h-2zM526 364h2v2h-2zM530 360h2v2h-2zM532 361h2v2h-2zM533 331h2v2h-2zM536 326h2v2h-2zM542 344h2v2h-2zM543 363h2v2h-2zM546 315h2v2h-2zM551 326h2v2h-2zM553 327h2v2h-2zM552 323h2v2h-2zM554 322h2v2h-2zM557 346h2v2h-2zM559 347h2v2h-2zM562 354h2v2h-2zM564 353h2v2h-2zM566 364h2v2h-2zM568 344h2v2h-2zM570 345h2v2h-2zM571 317h2v2h-2zM575 309h2v2h-2zM578 296h2v2h-2zM580 297h2v2h-2zM592 270h2v2h-2zM612 294h2v2h-2zM615 323h2v2h-2zM618 332h2v2h-2zM620 333h2v2h-2zM620 346h2v2h-2zM624 352h2v2h-2zM626 351h2v2h-2zM629 357h2v2h-2zM631 356h2v2h-2zM633 349h2v2h-2zM636 343h2v2h-2zM643 329h2v2h-2zM649 315h2v2h-2zM650 332h2v2h-2zM652 331h2v2h-2zM653 343h2v2h-2zM656 355h2v2h-2zM659 351h2v2h-2zM661 350h2v2h-2zM664 370h2v2h-2zM667 376h2v2h-2zM670 370h2v2h-2zM676 393h2v2h-2zM678 394h2v2h-2zM682 370h2v2h-2zM685 361h2v2h-2zM688 344h2v2h-2zM694 390h2v2h-2zM696 389h2v2h-2zM696 404h2v2h-2zM700 340h2v2h-2zM703 328h2v2h-2zM708 335h2v2h-2zM711 327h2v2h-2zM713 326h2v2h-2zM714 344h2v2h-2zM716 345h2v2h-2zM717 369h2v2h-2zM719 368h2v2h-2zM722 372h2v2h-2zM726 379h2v2h-2zM728 380h2v2h-2zM731 382h2v2h-2zM733 383h2v2h-2zM735 368h2v2h-2zM737 369h2v2h-2zM738 378h2v2h-2zM742 370h2v2h-2zM744 371h2v2h-2zM746 360h2v2h-2zM750 362h2v2h-2zM753 365h2v2h-2zM755 364h2v2h-2zM757 351h2v2h-2zM759 352h2v2h-2zM761 350h2v2h-2zM765 362h2v2h-2zM769 376h2v2h-2zM774 351h2v2h-2zM776 350h2v2h-2zM777 358h2v2h-2zM780 341h2v2h-2zM785 345h2v2h-2zM787 346h2v2h-2zM789 333h2v2h-2zM791 334h2v2h-2zM793 346h2v2h-2zM798 350h2v2h-2zM803 329h2v2h-2zM805 330h2v2h-2zM807 335h2v2h-2zM809 336h2v2h-2zM810 326h2v2h-2zM814 318h2v2h-2zM820 322h2v2h-2zM824 345h2v2h-2zM829 353h2v2h-2zM831 354h2v2h-2zM834 355h2v2h-2zM836 356h2v2h-2zM837 340h2v2h-2zM839 341h2v2h-2zM841 361h2v2h-2zM843 360h2v2h-2zM844 352h2v2h-2zM849 333h2v2h-2zM851 334h2v2h-2zM853 308h2v2h-2zM858 331h2v2h-2zM863 348h2v2h-2zM867 337h2v2h-2zM869 336h2v2h-2zM872 372h2v2h-2zM877 346h2v2h-2zM882 366h2v2h-2zM885 354h2v2h-2zM889 337h2v2h-2zM894 367h2v2h-2zM896 366h2v2h-2zM899 351h2v2h-2zM901 350h2v2h-2zM904 352h2v2h-2zM906 351h2v2h-2zM908 372h2v2h-2zM911 363h2v2h-2zM915 365h2v2h-2zM918 390h2v2h-2zM923 392h2v2h-2zM928 370h2v2h-2zM931 391h2v2h-2zM933 392h2v2h-2zM935 389h2v2h-2zM940 393h2v2h-2zM944 370h2v2h-2zM946 369h2v2h-2zM949 404h2v2h-2zM952 391h2v2h-2zM955 376h2v2h-2zM957 377h2v2h-2zM960 391h2v2h-2zM965 414h2v2h-2zM969 379h2v2h-2zM971 380h2v2h-2zM973 377h2v2h-2zM975 376h2v2h-2zM978 393h2v2h-2zM981 378h2v2h-2zM983 379h2v2h-2zM986 365h2v2h-2zM992 393h2v2h-2zM994 392h2v2h-2zM997 378h2v2h-2zM999 379h2v2h-2zM1001 383h2v2h-2zM1003 382h2v2h-2zM1005 390h2v2h-2zM1009 403h2v2h-2zM1012 412h2v2h-2zM1017 397h2v2h-2zM1019 396h2v2h-2zM1021 392h2v2h-2zM1025 412h2v2h-2zM1027 411h2v2h-2zM1029 401h2v2h-2zM1033 410h2v2h-2zM1035 411h2v2h-2zM1038 393h2v2h-2zM1042 389h2v2h-2zM1046 377h2v2h-2zM1050 374h2v2h-2zM1054 391h2v2h-2zM1059 390h2v2h-2zM1064 392h2v2h-2zM1066 393h2v2h-2zM1067 395h2v2h-2zM1069 394h2v2h-2zM1072 393h2v2h-2zM1074 392h2v2h-2zM1077 401h2v2h-2zM1082 402h2v2h-2zM1084 403h2v2h-2zM1086 383h2v2h-2zM1091 397h2v2h-2zM1095 414h2v2h-2zM1098 391h2v2h-2zM1100 390h2v2h-2zM1104 406h2v2h-2zM1106 405h2v2h-2zM1107 388h2v2h-2zM1109 387h2v2h-2zM1111 404h2v2h-2zM1114 384h2v2h-2zM1119 396h2v2h-2zM1124 384h2v2h-2zM1126 383h2v2h-2zM1128 369h2v2h-2zM1132 371h2v2h-2zM1134 372h2v2h-2zM1137 384h2v2h-2zM1139 385h2v2h-2zM1142 377h2v2h-2zM1144 378h2v2h-2zM1147 367h2v2h-2zM1151 357h2v2h-2zM1156 381h2v2h-2zM1158 382h2v2h-2zM1159 367h2v2h-2zM1161 368h2v2h-2zM1164 388h2v2h-2zM1168 390h2v2h-2zM1171 369h2v2h-2zM1173 368h2v2h-2zM1174 367h2v2h-2zM1176 368h2v2h-2zM1178 363h2v2h-2zM1182 363h2v2h-2zM1184 362h2v2h-2zM1186 348h2v2h-2zM1190 360h2v2h-2zM1195 364h2v2h-2zM1199 348h2v2h-2zM1201 347h2v2h-2zM1203 374h2v2h-2zM1208 383h2v2h-2zM1212 376h2v2h-2zM1217 367h2v2h-2zM1219 366h2v2h-2zM1221 373h2v2h-2zM1224 359h2v2h-2zM1229 354h2v2h-2zM1234 364h2v2h-2zM1239 355h2v2h-2zM1241 356h2v2h-2zM1243 374h2v2h-2zM1247 364h2v2h-2zM1251 355h2v2h-2zM1256 373h2v2h-2zM1258 372h2v2h-2zM1261 373h2v2h-2zM1266 348h2v2h-2zM1269 336h2v2h-2zM1275 333h2v2h-2zM1278 340h2v2h-2zM1282 355h2v2h-2zM1287 352h2v2h-2zM1289 351h2v2h-2zM1292 367h2v2h-2zM1294 366h2v2h-2zM1297 372h2v2h-2zM1301 352h2v2h-2zM1303 353h2v2h-2zM1305 351h2v2h-2zM1309 343h2v2h-2zM1311 342h2v2h-2zM1312 335h2v2h-2zM1316 342h2v2h-2zM1320 352h2v2h-2zM1324 349h2v2h-2zM1327 355h2v2h-2zM1330 369h2v2h-2zM1334 354h2v2h-2zM1338 353h2v2h-2zM1343 341h2v2h-2zM1348 357h2v2h-2zM1353 356h2v2h-2zM1355 357h2v2h-2zM1358 359h2v2h-2zM1360 358h2v2h-2zM1363 368h2v2h-2zM1367 335h2v2h-2zM1372 337h2v2h-2zM1375 330h2v2h-2zM1380 326h2v2h-2zM1385 332h2v2h-2zM1387 333h2v2h-2zM1388 330h2v2h-2zM1393 350h2v2h-2zM1395 351h2v2h-2zM1397 337h2v2h-2zM1402 317h2v2h-2zM1406 336h2v2h-2zM1410 351h2v2h-2zM1415 331h2v2h-2zM1417 330h2v2h-2zM1420 326h2v2h-2zM1425 334h2v2h-2zM1427 335h2v2h-2zM1429 330h2v2h-2zM1433 328h2v2h-2zM1437 341h2v2h-2zM1440 350h2v2h-2zM1444 320h2v2h-2zM1448 324h2v2h-2zM1452 330h2v2h-2zM1456 351h2v2h-2zM1461 352h2v2h-2zM1463 351h2v2h-2zM1466 342h2v2h-2zM1471 315h2v2h-2zM1473 314h2v2h-2zM1475 338h2v2h-2zM1479 316h2v2h-2zM1483 332h2v2h-2zM1485 333h2v2h-2zM1488 348h2v2h-2zM1492 313h2v2h-2zM1496 309h2v2h-2zM1498 310h2v2h-2zM1501 292h2v2h-2zM1506 306h2v2h-2zM1510 315h2v2h-2zM1516 321h2v2h-2zM1521 337h2v2h-2z" fill="#408080"/>
<polyline points="444.0,671.5 446.7,726.0 451.6,668.6 456.0,702.9 460.0,660.6 464.9,713.4 469.1,655.7 472.2,688.2 477.1,655.6 481.3,695.1 484.3,655.7 487.5,715.1 492.3,653.9 496.9,697.2 501.9,656.1 505.7,668.3 510.3,657.7 512.8,704.9 517.4,653.4 522.1,665.9 524.8,656.8" fill="none" stroke="#FF8080" stroke-width="1" stroke-linejoin="miter" stroke-miterlimit="2"/>
<polyline points="561.0,662.0 563.0,705.0 565.0,662.0 567.0,707.0 569.0,663.0" fill="none" stroke="#FF8080" stroke-width="1" stroke-linejoin="miter" stroke-miterlimit="2"/>
<polyline points="699.0,666.7 701.6,682.3 704.4,660.5 706.2,685.6 708.0,653.9 710.0,678.1 712.0,647.0 713.9,693.6 716.1,645.0 718.6,660.9 721.2,639.7 723.5,673.4 725.7,632.5 727.7,640.5 730.0,628.9 732.3,660.5 734.7,622.6 736.7,689.8 738.9,625.3 741.1,686.3 743.5,620.5 745.6,688.4 747.7,615.9 749.8,627.1 752.0,615.2 754.0,687.0 756.8,608.9 759.4,686.1 761.5,604.0 763.3,639.8 765.3,600.3 768.0,657.1 770.3,604.6 772.0,635.3 774.5,602.9 776.2,616.6 778.8,597.8 781.2,640.6 783.0,599.2 785.3,610.9 787.9,591.4 789.6,609.0 791.3,589.3 793.5,677.6 796.3,582.4 798.0,636.8 800.5,585.5 803.3,617.5 805.9,590.6 807.5,646.9 809.7,590.8 811.8,609.9 813.7,580.3 816.4,655.8 818.5,578.9 821.0,644.0 823.6,571.5 825.5,622.8 827.3,578.5 829.9,646.2 831.7,579.4 834.5,642.7 836.7,572.1 838.9,584.5 840.8,574.1 843.5,590.4 845.5,573.1 847.6,634.7 850.2,566.2 852.2,599.9 854.0,558.4 856.5,562.0 859.3,549.8 861.7,572.3 863.8,544.1 865.5,578.4 867.5,546.1 869.6,551.6 871.9,542.5 874.6,545.2 877.4,535.7 879.2,568.5 881.4,534.6 883.9,578.0 886.3,533.6 888.8,546.0 890.5,536.5 892.1,561.8 894.5,534.2 897.0,583.6 898.7,529.9 901.4,546.8 903.3,527.0 905.5,582.5 908.0,525.5 910.4,546.6 912.5,521.6 914.1,581.6 916.7,523.0 918.6,579.8 920.8,522.0 923.5,579.0 925.2,519.7 926.9,561.0 928.6,517.0 930.6,548.6 933.2,514.8 934.9,557.4 937.1,514.1 939.2,528.3 941.8,511.1 943.6,519.9 945.2,512.4 948.0,574.4 950.4,510.3 953.0,537.7 955.7,510.1 958.3,521.8 960.6,512.4 963.1,534.5 965.2,516.8 967.4,547.3 969.6,516.0 971.8,522.3 973.7,514.0 975.4,542.7 977.1,516.1 979.8,521.4 982.5,511.4 984.8,531.1 986.6,509.1 989.1,549.8 991.0,508.4 993.5,542.1 995.9,515.8 998.1,534.4 999.8,515.6 1002.1,547.3 1004.6,515.8 1006.2,544.5 1008.7,513.2 1010.9,525.9 1013.7,520.0 1016.5,528.2 1018.2,521.9 1020.6,536.8" fill="none" stroke="#FF8080" stroke-width="1" stroke-linejoin="miter" stroke-miterlimit="2"/>
<polyline points="1138.0,570.0 1140.0,611.0 1142.0,570.0 1144.0,611.0 1146.0,570.0" fill="none" stroke="#FF8080" stroke-width="1" stroke-linejoin="miter" stroke-miterlimit="2"/>
<polyline points="1193.0,587.9 1194.7,623.1 1197.2,590.3 1199.2,613.9 1200.8,590.4 1202.6,598.1 1204.4,588.5 1206.9,643.1 1209.3,588.5 1211.9,627.9 1214.3,586.8 1216.9,640.3 1218.6,585.0 1220.6,596.1 1222.4,579.1 1224.1,602.4 1226.9,576.6 1229.2,652.2 1231.7,580.1 1233.9,595.6 1235.5,580.0 1237.8,632.4 1239.6,574.3 1241.6,598.3 1243.4,573.6 1245.2,633.4 1247.6,574.1 1250.4,621.8 1252.2,582.1 1254.2,672.7 1256.4,575.3 1258.8,654.1 1261.0,582.0 1263.2,609.6 1265.8,579.5 1267.4,641.7 1270.0,572.8 1271.7,633.8 1274.2,571.6 1276.5,670.9 1278.3,579.4 1280.8,608.6 1283.4,579.9 1285.8,646.0 1288.3,568.6 1290.6,650.7 1293.2,576.7 1295.1,648.4 1297.5,573.2 1299.8,669.0" fill="none" stroke="#FF8080" stroke-width="1" stroke-linejoin="miter" stroke-miterlimit="2"/>
<polyline points="1300.0,628.9 1302.1,660.7 1304.2,631.8 1306.1,646.9 1308.0,630.7 1309.6,665.5 1311.3,629.9 1313.5,659.7 1315.8,641.7 1318.0,677.0 1319.7,630.7 1321.5,666.4 1324.0,629.2 1326.0,664.4 1328.5,627.6 1330.8,637.0 1332.6,641.8 1334.3,637.0 1336.6,631.1 1339.3,657.3 1342.1,638.5 1343.9,673.0 1345.6,631.6 1348.3,657.2 1350.8,631.8 1353.2,649.4 1355.4,627.0 1357.1,651.9 1358.8,633.3 1361.2,637.6 1363.2,630.7 1365.6,663.1 1368.2,634.5 1370.1,637.0 1371.8,633.4 1374.2,650.2 1376.6,636.0 1378.5,677.0 1380.8,629.0 1383.4,639.0 1385.2,639.7 1386.8,637.0 1389.6,635.4 1392.3,652.1 1394.4,628.5 1396.7,644.2 1399.4,632.4 1401.5,671.7 1403.9,628.4 1406.1,637.0 1408.6,638.2 1411.2,645.1 1413.8,640.3 1415.7,637.0 1417.9,638.7" fill="none" stroke="#FF8080" stroke-width="1" stroke-linejoin="miter" stroke-miterlimit="2"/>
<polyline points="1420.0,572.7 1422.8,621.4 1425.4,567.4 1427.5,656.0 1429.6,569.8 1431.6,619.3 1434.0,566.1 1435.7,602.3 1437.7,564.1 1439.9,652.6 1442.6,566.8 1444.8,595.5 1447.5,566.5 1449.4,656.0 1452.2,567.6 1454.7,610.3 1457.4,572.6 1459.2,586.3 1461.2,569.9 1462.9,584.8 1465.1,574.2 1466.8,615.3 1468.5,574.2 1470.9,617.9 1473.1,580.4 1475.6,630.2 1477.2,580.2 1480.0,617.1 1482.2,591.8 1484.9,598.6 1487.2,591.6 1489.7,656.0 1491.7,587.6 1494.0,624.2 1496.4,593.5 1498.0,629.0 1500.7,592.0 1503.4,645.5 1505.6,586.4 1508.2,656.0 1510.1,589.7 1512.2,603.6 1514.2,590.1 1515.8,656.0 1518.0,584.3 1520.7,631.9 1523.5,588.8" fill="none" stroke="#FF8080" stroke-width="1" stroke-linejoin="miter" stroke-miterlimit="2"/>
<polyline points="188.0,709.2 192.8,711.4 197.5,709.7 200.0,706.0 203.0,711.0 207.4,711.5 211.8,714.4 215.7,716.8 219.7,718.7 223.6,721.0 228.3,723.8 233.0,723.5 236.6,722.3 240.2,723.0 243.8,723.0 247.4,720.4 251.4,719.4 255.3,721.9 259.3,721.6 262.9,723.5 266.4,723.1 270.0,720.3 273.6,720.4 277.1,720.8 280.7,719.7 285.4,706.4 290.0,695.4 294.0,691.7 298.0,692.9 302.0,689.5 306.8,694.2 311.5,695.4 316.2,696.3 321.0,695.4 324.6,698.9 328.1,701.4 331.7,701.2 335.3,703.7 339.1,705.9 342.9,710.3 346.7,712.9 350.5,714.7 354.3,718.0 359.1,721.6 363.8,722.7 367.8,720.4 371.7,722.6 375.7,719.4 379.7,719.2 383.6,720.2 387.6,718.7 391.6,716.5 395.5,717.0 399.5,712.6 403.4,714.4 407.4,710.5 411.3,709.2 415.2,711.4 419.2,707.2 423.1,707.5 427.1,707.7 431.1,711.5 435.0,709.7 438.6,711.1 442.1,710.7 445.7,707.1 449.3,708.5 452.9,703.2 456.5,701.5 460.0,697.8 463.6,695.0 467.2,695.0 470.8,693.1 474.3,692.7 477.9,694.2 481.5,694.4 485.1,695.3 488.6,693.5 492.2,693.0 495.8,695.7 499.4,695.2 503.0,695.2 506.5,694.4 510.1,696.0 513.7,694.9 517.3,693.0 520.8,692.3 524.4,695.0 528.0,694.2 532.0,695.3 535.9,698.6 539.9,695.6 543.9,700.4 547.8,700.6 551.8,701.4 555.8,702.8 559.7,703.5 563.6,706.3 567.6,703.7 571.5,705.5 575.5,707.3 579.1,707.0 582.6,711.3 586.2,712.8 589.8,713.2 593.3,714.4 596.9,719.9 600.4,720.1 603.9,726.1 607.5,729.1 611.0,731.0 615.0,732.1 619.0,729.4 623.0,729.9 627.0,729.6 630.9,730.1 634.9,728.5 638.9,723.9 642.8,723.0 646.8,724.0 650.8,723.4 654.7,723.9 658.7,724.3 662.7,721.5 666.6,720.9 670.6,721.6 674.5,721.3 678.5,716.2 682.5,717.2 686.4,712.8 690.3,711.9 694.3,709.7 697.9,706.5 701.5,705.0 705.0,699.4 708.6,697.8 712.8,691.7 716.9,691.1 721.1,684.0 725.2,681.2 729.4,677.4 733.5,678.6 737.6,673.7 741.8,673.6 745.8,673.8 749.7,670.6 753.7,668.3 757.7,669.6 761.6,664.1 765.6,664.5 769.5,663.8 773.5,661.3 777.5,658.9 781.4,658.6 785.3,655.9 789.3,655.0 793.2,654.4 797.2,655.9 801.1,652.8 805.1,653.5 809.0,653.5 813.0,655.0 817.0,656.6 821.0,656.1 825.0,657.1 828.9,655.7 832.9,653.6 836.9,655.0 840.8,651.2 844.7,650.9 848.6,646.1 852.5,645.9 856.3,645.2 860.2,641.7 864.1,640.2 868.0,636.0 871.5,633.6 875.0,630.8 879.2,631.9 883.4,635.8 887.6,637.7 891.8,640.8 895.6,643.6 899.4,642.7 903.2,646.1 907.0,644.4 910.8,648.0 914.4,648.7 917.9,643.8 921.5,642.5 925.0,643.5 928.6,643.4 932.2,640.8 935.7,638.2 939.3,638.4 943.0,638.1 946.6,638.8 950.3,640.0 953.9,639.6 957.6,640.0 961.2,639.1 964.9,639.3 968.5,641.7 972.2,639.5 975.8,640.8 979.5,640.5 983.1,641.4 986.8,643.0 990.4,642.3 993.9,646.0 997.5,643.6 1001.0,646.5 1004.6,644.7 1008.2,646.8 1011.7,649.5 1015.3,648.0 1019.0,649.7 1022.8,648.5 1026.5,652.8 1030.3,653.7 1034.0,653.8 1037.7,655.4 1041.4,655.3 1045.0,656.8 1048.7,655.6 1052.4,656.7 1056.1,658.0 1059.7,656.6 1063.4,655.4 1067.1,656.4 1070.8,659.0 1074.4,660.0 1078.1,659.9 1081.8,659.8 1085.8,662.0 1089.7,663.0 1093.7,662.0 1097.7,664.3 1101.6,662.3 1105.6,664.5 1109.2,666.1 1112.7,663.6 1116.3,662.8 1119.8,663.9 1123.4,662.8 1127.0,666.6 1130.5,666.6 1134.1,666.3 1137.6,665.1 1141.2,664.5 1145.1,668.3 1149.1,667.2 1153.0,671.7 1157.0,671.6 1161.0,675.5 1165.0,676.8 1168.9,677.1 1172.9,674.7 1176.9,677.6 1181.3,680.2 1185.6,679.1 1190.0,678.8 1193.5,678.4 1197.0,678.3 1200.5,676.5 1204.0,674.0 1208.0,676.0 1212.0,676.9 1216.0,674.5 1220.0,673.6 1224.0,675.3 1228.0,676.4 1232.0,676.3 1235.9,678.3 1239.9,681.9 1243.9,682.5 1247.8,681.8 1251.8,683.5 1256.0,683.2 1260.1,687.4 1264.2,687.8 1268.4,690.7 1272.6,695.7 1276.7,696.6 1280.8,700.4 1285.0,705.0 1289.0,711.0 1293.0,716.1 1297.0,721.6 1300.9,725.8 1304.9,729.9 1308.8,733.4 1312.8,733.5 1316.7,735.4 1320.7,733.6 1324.6,736.2 1328.5,733.1 1332.5,734.6 1336.5,735.7 1340.4,734.1 1344.4,734.3 1348.4,733.2 1352.3,731.0 1356.3,729.9 1360.2,728.3 1364.2,728.1 1368.2,727.5 1372.1,727.1 1376.0,728.8 1380.0,728.7 1384.2,724.4 1388.3,726.1 1392.5,719.6 1396.7,719.2 1400.5,719.0 1404.3,716.2 1408.1,714.8 1411.9,711.5 1415.7,712.0 1419.7,709.3 1423.6,708.4 1427.6,703.7 1431.5,703.4 1435.5,703.5 1439.4,701.3 1443.4,698.9 1447.3,697.7 1451.3,696.6 1454.9,695.8 1458.4,696.1 1462.0,694.5 1465.6,693.0 1470.3,684.8 1475.0,674.0 1478.6,669.5 1482.2,665.8 1485.8,664.8 1489.4,659.8 1493.6,656.0 1497.7,653.3 1501.8,653.2 1506.0,650.3 1510.0,649.2 1514.0,646.3 1518.0,645.8 1522.0,641.5 1526.0,639.6" fill="none" stroke="#00FFFF" stroke-width="1" stroke-linejoin="miter" stroke-miterlimit="2"/>
<polyline points="188.0,767.0 190.4,767.0 193.0,767.0 195.8,767.0 198.4,767.0 201.5,767.0 203.6,767.0 206.3,767.0 209.5,767.0 212.1,763.7 214.5,735.0 217.5,737.0 220.3,751.3 222.4,767.0 224.6,734.5 226.7,761.3 229.4,741.8 231.8,736.2 234.6,752.7 237.3,749.1 239.4,747.8 241.4,767.0 243.5,703.4 246.1,767.0 248.6,754.9 250.8,719.0 253.2,749.5 255.8,710.1 258.9,767.0 262.0,750.4 264.5,718.1 266.6,747.0 268.9,729.0 271.1,762.5 274.3,767.0 277.4,751.4 279.4,715.4 282.6,761.1 284.8,767.0 288.0,762.6 290.8,730.4 293.0,745.4 295.3,759.9 298.2,699.7 301.4,763.4 304.2,700.0 307.3,767.0 309.8,713.4 312.1,765.7 314.5,751.8 316.6,708.9 319.3,767.0 322.4,705.9 325.4,752.3 328.1,727.2 330.3,759.3 332.8,725.4 335.1,728.9 338.0,760.5 340.6,738.1 343.5,767.0 346.3,743.0 349.1,721.3 351.6,718.0 354.8,742.4 357.0,743.9 359.3,739.8 362.0,711.4 364.8,744.6 367.2,754.9 369.2,715.7 371.7,742.2 374.2,752.4 377.3,724.7 380.0,716.9 383.1,754.8 385.2,736.1 387.4,712.9 390.1,767.0 392.4,731.7 395.2,745.7 397.7,740.7 400.0,749.5 402.4,724.6 405.1,767.0 408.1,748.7 410.5,754.2 413.5,745.4 415.9,749.3 418.8,734.0 421.6,728.9 423.8,767.0 426.6,713.2 429.1,746.9 432.0,745.8 434.2,750.4 437.1,767.0 440.2,711.8 442.5,663.9 444.6,700.8 447.4,650.3 450.1,682.0 452.4,666.9 455.2,659.9 458.0,633.6 460.1,657.4 462.9,681.1 465.7,699.9 468.4,635.4 470.9,733.4 473.7,654.6 476.2,734.0 478.9,635.5 481.1,728.3 483.6,673.2 485.8,707.1 487.8,687.1 490.1,711.5 492.1,680.3 495.0,686.9 498.2,711.2 501.3,658.8 504.0,737.2 506.8,648.7 509.7,705.7 512.5,654.4 515.1,677.7 517.1,738.7 519.8,702.3 522.7,639.5 525.6,739.7 528.8,652.1 531.6,737.0 534.2,700.4 536.5,667.7 538.6,741.5 541.0,672.8 543.6,742.2 546.7,675.3 549.0,704.4 551.7,687.9 554.5,743.9 557.3,707.3 559.3,662.3 561.8,745.0 564.0,706.7 566.9,657.9 569.9,727.3 572.5,746.6 575.4,658.5 577.9,689.4 580.7,747.8 583.7,690.8 586.6,714.1 589.5,699.2 591.7,730.3 594.8,717.0 596.8,727.4 599.0,767.0 602.1,767.0 604.5,767.0 607.1,767.0 609.2,767.0 611.6,767.0 614.4,767.0 616.8,767.0 619.5,767.0 621.7,767.0 624.5,767.0 626.7,767.0 628.9,763.1 631.8,725.8 634.2,741.0 636.4,767.0 638.6,746.5 641.4,748.4 644.4,767.0 647.4,728.6 649.6,747.6 651.7,717.0 654.2,767.0 656.9,719.1 659.0,724.1 661.1,767.0 663.4,717.4 666.3,748.9 668.8,735.3 671.0,758.2 674.2,706.8 676.2,729.9 678.8,725.9 681.6,752.1 684.6,746.4 687.4,730.0 690.5,743.0 693.5,719.4 695.7,639.4 698.5,720.7 700.9,708.5 703.6,658.1 705.9,701.3 708.0,696.6 710.8,675.5 712.9,724.8 715.0,620.1 718.2,686.6 721.3,665.3 724.0,633.5 726.3,724.5 728.8,592.8 731.2,709.6 733.2,671.4 735.2,646.0 738.0,590.0 740.4,678.9 742.7,711.5 745.2,704.3 747.6,590.0 750.0,690.9 752.4,628.4 754.4,676.1 757.1,686.4 759.2,691.5 761.8,629.6 764.6,691.7 767.6,676.9 770.8,706.6 773.4,605.4 776.1,694.5 778.6,612.8 781.7,683.4 783.8,680.3 786.5,600.0 788.8,723.4 791.2,608.5 793.8,646.0 796.0,683.2 798.4,683.1 800.7,612.7 803.6,690.7 805.6,667.9 808.8,653.2 811.5,709.4 814.4,666.6 817.5,722.9 820.4,600.9 823.3,667.1 826.2,690.2 828.3,668.5 831.2,693.8 833.6,722.6 836.5,634.8 839.4,698.1 841.8,716.5 844.8,632.8 847.9,692.9 850.8,717.6 853.2,594.5 855.8,722.2 858.2,597.9 860.4,640.2 862.8,715.7 864.9,614.9 867.6,592.4 870.7,623.4 872.8,658.4 875.6,626.4 878.8,721.6 881.4,634.8 884.5,654.8 887.4,685.3 890.1,590.0 892.3,641.0 895.4,643.0 898.1,699.1 900.5,683.3 903.7,687.7 906.0,639.3 908.4,614.1 911.5,720.0 914.1,647.9 916.9,719.7 919.4,681.0 921.7,616.6 924.4,668.3 927.3,624.4 929.6,637.1 931.8,659.6 935.0,679.9 937.5,643.1 940.2,705.9 942.2,718.5 944.8,630.9 947.5,607.6 950.7,718.1 953.2,625.2 956.0,717.8 958.0,590.0 960.8,671.4 962.9,644.9 965.0,717.4 967.7,628.5 970.1,716.3 972.5,590.0 974.7,654.6 977.3,689.6 979.9,696.4 982.4,645.6 985.5,679.2 988.7,603.2 991.9,716.1 994.2,644.4 996.6,671.4 999.3,666.5 1001.9,661.8 1004.0,597.3 1007.2,715.4 1010.1,705.2 1013.2,699.2 1016.0,695.6 1018.3,727.9 1021.3,730.0 1023.9,698.6 1026.3,653.0 1029.1,624.9 1031.3,730.0 1033.4,615.0 1035.8,698.6 1038.6,706.7 1041.3,680.3 1044.1,685.2 1046.3,730.0 1048.8,719.8 1051.9,651.3 1054.0,730.0 1057.0,698.8 1060.0,701.8 1062.1,682.6 1065.1,722.2 1067.9,664.1 1071.0,680.9 1074.0,710.3 1076.5,686.2 1078.9,697.6 1081.5,615.0 1083.6,681.6 1086.1,633.5 1088.6,725.2 1090.7,708.3 1093.0,628.6 1095.1,628.8 1097.3,730.0 1100.4,730.0 1103.1,620.2 1106.3,676.7 1109.4,642.6 1112.0,699.0 1115.0,644.9 1117.4,665.9 1119.9,676.0 1122.2,677.7 1125.2,651.9 1127.4,672.9 1130.1,710.6 1132.6,684.0 1134.6,645.7 1136.9,717.1 1139.7,651.5 1142.1,716.2 1145.1,686.1 1148.1,681.5 1150.4,659.5 1152.4,657.3 1155.4,713.4 1157.4,691.3 1160.3,730.0 1163.0,637.6 1165.1,620.6 1167.9,730.0 1170.3,667.6 1173.0,632.2 1176.0,633.1 1178.6,706.6 1181.3,694.0 1184.1,627.0 1186.5,682.0 1189.6,689.8 1191.7,617.1 1194.3,688.5 1197.4,573.1 1199.6,709.0 1202.2,591.9 1204.5,635.2 1207.2,708.6 1210.4,616.1 1213.5,683.9 1216.0,652.0 1218.3,601.5 1221.3,689.0 1223.9,692.1 1226.8,571.0 1229.9,682.2 1232.3,638.8 1235.4,592.3 1237.8,709.0 1240.1,692.2 1242.6,574.7 1244.6,709.0 1247.2,582.4 1250.1,689.9 1253.0,618.5 1255.2,571.0 1258.3,709.0 1261.4,578.3 1263.4,618.1 1265.8,683.7 1268.9,670.1 1271.3,578.6 1273.7,653.7 1276.0,655.4 1278.3,622.6 1281.1,590.3 1283.7,614.9 1286.5,709.0 1289.6,614.7 1292.2,653.1 1294.4,708.9 1297.3,575.8 1300.4,656.9 1303.6,620.8 1306.6,608.9 1309.4,613.1 1311.5,589.0 1314.0,584.0 1316.9,609.2 1319.0,610.5 1321.9,633.8 1324.4,551.5 1327.0,635.9 1329.6,550.0 1332.6,620.4 1335.2,660.0 1338.1,534.0 1340.6,660.0 1342.7,646.1 1345.8,534.0 1347.8,605.1 1349.9,638.7 1352.2,586.7 1355.1,633.5 1357.1,554.0 1359.3,562.5 1361.8,660.0 1364.4,622.0 1367.0,589.7 1370.2,585.2 1372.6,574.9 1374.6,604.0 1376.8,573.3 1379.5,589.8 1381.7,598.6 1384.1,652.0 1386.4,561.4 1388.5,583.7 1391.4,660.0 1393.7,534.0 1395.8,637.5 1398.8,585.0 1401.9,595.9 1404.7,647.7 1407.2,594.3 1409.4,605.0 1412.4,534.0 1415.3,585.8 1417.7,558.3 1419.9,660.0 1422.7,564.0 1425.0,665.0 1427.2,609.0 1430.2,579.2 1432.6,651.6 1435.7,566.1 1438.3,630.4 1440.4,591.6 1443.5,657.5 1446.3,582.6 1449.3,574.0 1452.2,632.6 1454.9,616.5 1458.1,609.0 1461.0,599.7 1463.5,607.5 1466.3,597.5 1469.0,540.0 1471.8,645.9 1474.2,540.0 1477.2,665.0 1479.4,548.3 1481.7,633.8 1483.9,665.0 1486.8,577.4 1488.9,646.6 1492.0,614.9 1494.0,640.8 1496.7,568.5 1498.9,620.6 1501.3,641.5 1503.5,616.3 1506.5,648.0 1508.9,665.0 1510.9,585.2 1514.0,637.2 1516.1,665.0 1518.7,540.0 1521.4,665.0 1524.0,607.7 1526.0,607.7" fill="none" stroke="#00FF40" stroke-width="1" stroke-linejoin="miter" stroke-miterlimit="2"/>
<polyline points="295.0,700.0 297.0,653.0 299.0,700.0" fill="none" stroke="#00FF40" stroke-width="1" stroke-linejoin="miter" stroke-miterlimit="2"/>
<polyline points="1336.5,700.0 1338.5,439.0 1340.5,700.0" fill="none" stroke="#00FF40" stroke-width="1" stroke-linejoin="miter" stroke-miterlimit="2"/>
<polyline points="1387.6,700.0 1389.6,461.0 1391.6,700.0" fill="none" stroke="#00FF40" stroke-width="1" stroke-linejoin="miter" stroke-miterlimit="2"/>
<polyline points="188.0,449.0 341.7,449.0 342.0,451.0 356.0,449.5 362.0,452.0 370.0,450.0 378.0,454.0 385.0,452.0 392.0,456.0 400.0,455.0 410.0,457.4 419.0,452.0 424.0,453.0 429.0,457.4 435.0,454.0 444.7,459.7 457.3,461.0 1526.0,461.0" fill="none" stroke="#808000" stroke-width="2" stroke-linejoin="miter" stroke-miterlimit="2"/>
<polyline points="188.0,767.0 299.7,767.0 303.0,764.0 316.3,764.0 320.0,767.0 437.5,767.0 449.3,754.8 458.8,735.8 463.6,726.3 473.0,718.0 482.6,724.0 494.5,714.4 511.0,697.8 528.0,700.2 535.0,703.7 543.4,724.0 570.8,726.3 580.3,740.6 594.5,766.7 670.5,767.0 682.4,750.0 694.3,726.3 703.8,702.5 713.3,686.0 722.8,659.8 730.0,638.4 737.0,626.5 746.6,617.0 756.0,595.6 763.2,571.9 772.7,569.5 783.6,557.4 792.7,551.3 803.4,534.5 811.0,539.0 823.3,523.8 835.5,505.5 847.7,481.0 853.8,453.6 866.0,417.0 875.2,420.6 884.4,436.8 895.0,450.5 905.8,449.0 918.0,427.6 930.2,432.8 942.4,444.4 960.7,475.0 970.0,468.8 982.0,505.5 994.3,533.0 1013.0,560.0 1024.8,581.4 1039.0,601.6 1053.3,605.0 1058.0,607.5 1070.0,619.4 1079.5,631.3 1084.0,640.8 1091.3,637.2 1096.0,640.8 1108.0,667.0 1122.2,664.0 1141.0,681.2 1148.4,676.9 1169.7,708.5 1186.4,715.6 1192.0,716.8 1199.5,695.4 1209.0,675.2 1218.5,669.3 1228.0,655.0 1237.5,649.8 1254.0,648.0 1268.4,635.6 1280.3,633.7 1325.4,633.7 1339.7,623.0 1351.6,610.0 1375.3,606.3 1396.7,592.0 1408.6,582.6 1418.0,581.0 1463.2,581.0 1472.7,592.0 1484.6,594.4 1526.0,594.4" fill="none" stroke="#804040" stroke-width="2" stroke-linejoin="miter" stroke-miterlimit="2"/>
<polyline points="188.0,148.5 196.0,147.0 208.0,146.5 218.5,142.8 222.6,143.4 232.8,147.5 241.0,143.4 247.0,141.4 289.8,141.4 290.5,140.0 310.0,141.4 460.8,141.4 462.8,139.3 469.0,140.4 487.0,141.4 528.0,141.6 606.0,142.0 610.0,145.0 620.0,145.0 632.0,142.0 667.0,142.0 674.6,147.0 687.0,148.0 720.5,149.0 729.6,153.0 748.0,161.0 760.0,169.0 772.0,175.0 784.6,184.0 790.7,191.8 803.0,198.8 815.0,205.5 833.5,216.0 851.8,220.8 868.0,232.0 877.0,235.5 892.4,257.5 898.5,261.0 913.8,278.8 929.0,286.5 944.4,289.5 968.8,291.7 984.0,295.6 1002.4,291.0 1020.7,286.5 1037.5,285.6 1051.3,278.8 1075.7,265.0 1088.0,254.4 1112.4,242.2 1124.6,236.0 1149.0,235.5 1173.5,233.6 1192.0,229.0 1200.7,232.4 1220.5,235.5 1235.8,248.3 1248.0,256.0 1263.3,269.7 1278.6,282.0 1293.9,307.9 1309.0,332.3 1318.3,339.3 1336.6,335.4 1352.0,330.2 1367.0,329.3 1393.0,328.3 1410.0,321.6 1422.0,315.5 1440.5,306.3 1458.8,300.2 1466.5,288.0 1480.0,239.0 1495.5,202.5 1507.7,187.2 1526.0,174.4" fill="none" stroke="#808080" stroke-width="2" stroke-linejoin="miter" stroke-miterlimit="2"/>
<polyline points="188.0,768.0 190.5,768.0 193.2,768.0 195.8,768.0 198.2,768.0 200.2,768.0 202.4,768.0 205.6,768.0 208.6,768.0 210.9,768.0 212.9,768.0 215.2,768.0 218.4,768.0 221.5,768.0 224.2,768.0 227.3,768.0 229.9,768.0 232.8,768.0 235.6,768.0 238.1,768.0 240.5,768.0 243.2,768.0 245.4,753.0 247.7,760.6 250.2,755.9 252.8,759.8 255.0,752.0 257.1,763.6 259.7,758.3 261.7,761.1 264.3,764.8 267.3,755.0 269.6,755.0 272.8,759.8 275.0,748.1 278.1,761.5 280.6,749.7 283.0,767.0 285.6,745.7 287.8,764.3 290.7,765.1 293.2,761.1 295.3,750.8 298.3,761.2 300.6,759.7 303.3,766.1 306.5,762.6 309.3,756.1 311.6,756.2 313.8,760.2 315.9,755.9 318.2,753.4 321.3,764.9 324.4,755.8 327.4,755.8 330.2,756.9 333.1,749.9 335.5,766.8 337.6,746.1 340.5,758.5 343.5,753.4 346.5,766.2 349.4,753.3 351.5,767.0 353.9,761.7 356.1,766.9 358.9,752.9 361.2,754.2 363.6,759.5 365.7,754.8 367.9,750.2 370.9,767.0 373.8,758.7 376.2,759.0 378.9,756.1 381.8,754.2 384.8,756.0 387.9,767.0 390.8,747.9 393.0,752.9 395.6,752.6 398.6,754.6 401.1,757.9 403.4,754.1 406.1,760.3 408.3,746.5 411.5,761.5 414.4,761.6 417.0,752.4 419.4,742.5 421.9,725.4 424.8,756.8 427.5,745.1 430.3,734.1 432.6,760.5 434.7,744.3 436.7,743.0 439.1,741.3 441.7,718.8 444.0,758.2 446.4,721.2 448.9,715.0 451.3,741.2 453.3,737.4 455.9,738.5 458.1,747.4 460.8,739.8 463.3,735.2 466.4,731.5 468.5,733.2 470.6,726.1 473.6,718.2 476.7,730.5 479.0,752.6 481.7,732.8 484.3,724.7 486.9,738.8 489.2,717.0 492.2,737.3 494.7,733.9 496.8,741.1 498.9,719.6 502.1,721.6 504.8,746.7 507.4,733.6 509.8,744.9 512.5,736.4 515.6,711.9 517.6,731.0 520.2,718.4 522.8,745.9 524.8,700.8 527.9,727.6 530.1,737.7 532.5,746.8 535.6,735.1 538.2,725.7 540.9,714.6 544.0,730.9 547.1,723.1 549.9,745.1 552.6,723.9 555.7,742.8 557.9,736.6 561.0,759.8 563.3,758.5 565.5,767.0 568.5,754.5 571.6,753.8 573.7,752.7 576.4,754.9 579.4,764.1 582.2,732.8 584.8,748.6 586.9,755.0 589.0,763.6 591.0,768.0 593.6,768.0 595.9,768.0 598.9,768.0 601.2,768.0 604.2,768.0 606.6,768.0 608.6,768.0 611.7,768.0 614.9,749.9 617.8,765.0 620.6,757.5 623.1,759.1 625.9,748.7 628.5,762.5 631.4,746.9 634.2,756.7 636.9,767.0 639.6,762.1 642.6,752.7 644.8,757.7 647.3,755.7 649.8,760.8 652.8,765.4 655.4,763.8 658.6,765.4 661.7,758.8 663.8,763.8 667.0,755.6 669.4,753.6 671.5,746.0 674.3,767.0 677.4,754.2 680.6,755.1 682.7,750.3 685.5,762.1 687.5,760.0 690.0,742.3 692.3,759.4 695.4,716.9 697.5,743.8 700.6,741.6 703.0,760.7 705.6,746.8 707.7,743.9 710.1,717.1 713.0,718.8 716.1,734.8 718.2,678.2 721.3,712.7 723.7,745.3 726.8,667.5 729.9,726.1 733.0,717.6 735.6,727.3 738.5,755.8 740.5,707.6 743.1,710.1 745.9,729.3 748.4,714.5 751.3,700.3 753.4,667.9 756.4,699.6 758.7,696.9 761.0,707.5 764.2,704.6 767.0,746.7 769.3,663.0 771.6,713.2 773.6,740.1 776.3,731.2 778.4,705.2 780.5,722.5 783.7,707.3 786.4,725.3 788.5,739.2 790.7,714.1 793.2,720.9 795.6,713.5 798.1,734.0 800.4,710.7 802.8,752.7 805.9,711.0 808.4,703.8 811.5,703.0 814.4,758.9 816.7,705.5 819.6,710.4 822.0,712.0 824.6,733.4 827.0,726.8 830.1,748.0 832.7,726.5 835.7,685.6 838.4,702.9 840.8,721.4 843.9,723.4 846.5,705.5 848.6,669.1 851.4,758.6 853.7,710.8 856.8,713.3 859.8,708.6 862.1,702.9 865.2,683.3 868.2,758.4 870.2,717.0 873.1,739.7 875.8,713.2 878.1,724.5 880.3,712.8 882.3,719.8 884.4,744.1 886.4,685.7 889.5,737.9 892.7,719.4 895.2,658.6 898.0,751.8 900.9,697.8 903.7,743.7 906.1,692.6 908.6,731.5 911.4,700.7 914.5,737.5 916.6,702.8 918.9,721.5 922.0,729.6 924.1,700.8 927.3,721.6 929.6,708.2 932.4,705.3 934.7,757.8 936.9,694.9 939.9,736.7 942.8,746.7 945.1,718.2 948.0,726.7 950.4,757.6 953.3,724.2 956.2,720.7 959.1,672.7 962.2,724.8 964.3,692.4 967.3,737.7 970.0,719.1 973.1,702.3 976.0,710.1 978.5,657.5 981.0,709.8 983.3,671.3 985.6,746.0 988.1,753.4 991.1,757.2 994.3,730.0 996.4,734.7 999.1,755.3 1001.4,729.0 1003.5,725.8 1006.2,733.7 1009.4,735.2 1012.3,756.7 1015.1,707.0 1017.2,752.6 1019.8,733.8 1022.0,725.8 1024.6,741.3 1027.3,763.5 1030.2,743.8 1032.9,724.4 1035.0,762.3 1037.5,754.4 1040.2,730.5 1042.2,736.4 1044.2,707.0 1046.6,757.1 1049.2,754.2 1052.4,759.2 1055.2,723.6 1058.1,761.5 1060.3,744.4 1063.1,758.1 1065.3,741.8 1067.7,728.2 1070.8,754.9 1073.8,723.4 1076.0,763.7 1079.1,751.3 1081.8,752.5 1084.3,739.0 1087.0,725.8 1090.0,732.0 1093.0,751.1 1095.1,752.5 1097.4,725.4 1099.7,752.6 1102.6,722.7 1105.4,732.0 1107.7,728.5 1110.5,742.1 1113.1,761.4 1115.9,723.4 1118.3,728.6 1121.4,758.5 1124.5,732.1 1126.6,758.7 1129.3,727.7 1131.5,747.9 1134.1,716.6 1136.4,734.3 1139.1,750.5 1141.3,722.7 1144.3,758.5 1146.6,744.6 1148.8,728.9 1151.8,714.5 1154.5,748.2 1156.9,721.7 1159.4,757.4 1161.6,738.7 1163.6,748.9 1165.6,732.5 1168.0,742.9 1170.5,720.5 1173.7,740.4 1175.7,748.6 1178.7,732.7 1181.6,764.0 1184.2,763.6 1186.8,729.0 1189.9,761.8 1193.0,730.1 1195.3,719.5 1198.1,717.8 1201.0,721.2 1203.9,704.9 1206.1,736.6 1208.6,697.3 1211.1,693.3 1214.2,732.1 1217.1,682.9 1220.2,707.5 1222.7,686.0 1225.8,722.3 1228.1,709.9 1231.3,700.0 1234.1,696.8 1236.3,723.1 1239.2,701.1 1242.0,702.6 1244.3,683.9 1247.3,689.9 1250.2,716.4 1253.0,700.6 1255.3,671.4 1258.2,709.8 1261.1,727.3 1263.4,702.1 1266.0,706.1 1268.1,687.3 1271.2,663.8 1273.6,721.5 1275.8,695.4 1278.7,679.0 1281.6,723.3 1283.9,710.9 1286.2,700.4 1289.1,687.0 1291.2,701.1 1294.3,688.8 1297.5,730.1 1300.7,664.4 1303.5,676.2 1306.5,638.5 1309.3,650.6 1312.3,645.4 1314.5,688.2 1316.5,646.5 1319.5,636.9 1321.9,664.1 1324.1,648.8 1327.3,684.4 1329.6,621.3 1331.7,651.9 1334.2,677.7 1336.7,659.9 1339.4,650.5 1342.0,659.0 1344.2,678.0 1346.9,664.3 1349.3,663.4 1351.6,608.6 1353.7,670.1 1356.9,654.2 1359.6,680.3 1362.6,643.8 1365.5,678.0 1368.2,680.8 1370.7,615.6 1373.5,637.8 1376.6,649.5 1379.6,650.6 1382.3,648.1 1385.1,651.9 1387.4,679.6 1390.3,646.8 1392.5,641.9 1395.3,665.9 1397.7,665.8 1400.2,632.0 1402.3,648.5 1405.1,669.3 1407.4,675.3 1409.4,668.1 1412.3,661.5 1414.7,646.5 1417.2,674.1 1420.3,649.3 1423.1,726.0 1425.2,684.3 1428.1,677.0 1430.6,690.4 1433.6,725.4 1435.9,696.4 1438.4,684.5 1441.3,700.8 1443.5,684.4 1445.9,635.5 1448.0,665.9 1450.2,690.4 1453.2,671.8 1456.0,632.8 1459.0,713.9 1462.1,711.4 1464.9,663.4 1467.4,671.4 1470.0,724.6 1472.3,687.7 1475.1,678.0 1477.7,692.3 1480.7,687.9 1482.9,679.5 1486.0,682.2 1488.7,689.3 1490.7,643.0 1493.6,659.0 1496.1,689.3 1499.0,725.9 1502.1,711.9 1504.2,645.0 1507.2,715.2 1509.4,710.5 1511.7,669.8 1513.7,722.0 1515.7,678.2 1518.0,672.3 1520.9,681.7 1524.0,662.4 1526.0,678.7 1526.0,678.7" fill="none" stroke="#008000" stroke-width="3" stroke-linejoin="miter" stroke-miterlimit="2"/>
<polyline points="188.0,661.7 191.2,664.4 194.3,666.4 199.9,664.5 204.6,669.6 208.6,669.3 212.5,669.4 216.5,669.9 219.7,671.0 222.8,673.0 226.8,674.1 230.8,675.0 235.5,678.8 238.7,678.7 241.8,678.3 243.4,676.7 247.1,676.6 250.8,677.5 254.5,677.2 257.7,679.0 261.4,679.1 265.1,678.9 268.8,678.8 272.0,676.7 275.1,677.0 278.3,676.2 281.4,676.7 283.8,668.0 287.8,664.0 288.6,658.5 293.3,653.8 297.3,649.8 301.2,645.8 305.1,649.0 309.1,653.0 313.1,649.3 316.3,649.3 318.6,653.0 324.2,653.0 328.9,657.7 332.1,659.1 335.2,661.2 338.4,662.5 342.4,666.4 346.4,671.2 350.1,673.4 353.7,676.0 357.4,678.3 360.6,678.8 364.6,678.6 368.5,678.3 371.7,673.5 375.3,673.3 378.9,673.2 382.4,672.7 386.0,673.0 388.3,676.7 392.3,672.0 395.5,671.6 398.6,670.8 401.8,669.6 405.0,668.8 408.9,667.1 412.9,664.8 416.1,665.5 419.2,665.7 422.4,665.6 426.4,664.8 430.3,664.8 435.0,666.7 438.2,665.7 441.4,664.5 444.7,665.1 448.0,666.0 451.0,663.7 454.0,662.2 457.2,659.5 460.4,656.2 463.6,653.8 468.3,652.2 471.6,652.1 474.9,651.6 478.1,651.8 481.4,652.3 484.7,652.2 487.9,652.2 491.2,651.5 494.5,651.5 499.2,649.8 502.4,650.0 505.6,649.9 508.8,649.4 512.0,650.2 515.2,650.1 518.4,649.8 521.6,649.6 524.8,650.2 528.0,649.8 531.2,651.8 534.3,653.1 537.5,654.6 540.7,655.5 543.8,656.9 547.0,657.4 550.6,657.6 554.1,657.8 557.7,657.4 561.3,657.9 566.0,662.2 569.2,662.8 572.3,663.4 575.5,663.3 579.1,665.3 582.6,667.1 586.2,669.1 589.8,670.5 593.0,671.4 596.1,671.9 599.3,672.9 602.5,677.2 605.6,681.1 608.8,684.7 612.4,685.6 615.9,687.2 619.5,688.3 623.1,687.5 626.6,686.4 630.2,685.1 633.7,683.2 637.3,682.4 640.8,682.2 644.4,681.9 648.0,681.2 651.5,681.2 654.7,680.6 657.9,680.1 661.0,679.9 664.2,678.3 667.4,678.6 670.6,677.6 673.8,675.5 676.9,674.2 680.1,672.2 683.3,670.7 686.4,668.2 689.6,666.9 692.7,665.7 695.9,664.8 699.0,663.3 702.2,659.1 705.4,654.4 708.6,650.3 712.1,645.1 715.7,640.7 719.2,635.2 722.8,630.8 726.0,628.1 729.1,626.0 732.3,623.0 735.5,621.4 738.6,619.3 741.8,617.0 745.3,614.2 748.9,611.2 752.5,609.0 756.0,606.3 759.2,603.4 762.3,601.5 765.5,598.9 768.7,595.7 771.8,593.5 775.0,590.9 778.6,589.9 782.1,590.2 785.7,589.2 789.3,588.5 793.3,583.7 797.2,580.2 801.2,575.4 804.8,578.7 808.3,581.4 811.6,579.2 815.0,576.3 818.3,574.6 821.7,572.0 825.0,569.5 828.1,568.4 831.1,567.2 834.2,566.3 837.2,565.5 840.3,564.2 843.3,563.2 846.4,562.4 850.1,556.6 853.8,551.3 856.9,549.0 859.9,546.2 863.0,543.4 866.0,541.0 869.1,538.6 872.1,535.8 875.2,533.0 878.2,532.0 881.3,531.4 884.4,530.7 887.4,530.3 890.5,528.7 893.5,528.4 896.6,526.7 899.6,525.9 902.7,524.2 905.8,523.6 908.9,522.3 911.9,521.0 915.0,519.2 918.0,517.3 921.1,515.4 924.1,512.9 927.1,511.1 930.2,508.8 933.2,507.0 936.3,506.1 939.3,504.7 942.4,504.0 945.4,504.8 948.5,505.0 951.5,505.9 954.6,506.3 957.6,506.8 960.7,507.5 963.8,508.0 966.8,508.5 970.1,508.4 973.4,507.3 976.7,507.1 980.1,507.1 983.4,506.4 986.7,505.8 990.0,505.7 993.8,510.7 997.5,508.8 1000.6,511.7 1003.8,513.8 1006.9,510.7 1012.5,514.4 1016.2,516.7 1020.0,518.2 1023.1,519.9 1026.3,522.6 1030.0,523.1 1033.8,523.2 1036.9,526.2 1040.0,528.8 1042.6,533.2 1046.3,534.8 1052.0,537.3 1055.0,534.5 1058.9,537.6 1062.6,538.2 1067.6,541.6 1072.6,542.3 1077.7,546.3 1080.2,551.4 1084.1,551.7 1088.1,551.2 1092.0,551.6 1096.4,557.0 1099.6,558.5 1102.7,559.5 1106.5,562.8 1110.2,565.8 1113.5,565.4 1116.7,566.2 1120.0,565.9 1123.2,566.1 1126.5,565.8 1127.7,568.6 1131.5,569.1 1135.3,569.5 1137.8,570.8 1140.3,568.6 1143.4,568.6 1146.5,569.0 1151.5,573.3 1155.2,573.1 1159.0,573.9 1162.8,580.8 1167.8,582.7 1171.1,582.9 1174.5,583.5 1177.8,583.3 1180.3,585.8 1184.7,586.3 1189.0,585.8 1191.6,587.7 1195.4,585.2 1200.0,582.0 1203.5,582.0 1206.9,581.2 1210.3,580.9 1213.8,580.2 1217.0,578.8 1220.1,577.2 1223.3,575.9 1226.5,573.7 1229.6,572.0 1232.8,570.7 1236.0,570.4 1239.1,571.1 1242.3,570.3 1245.5,570.6 1248.6,570.5 1251.8,570.6 1255.0,570.9 1258.1,571.0 1261.3,570.7 1264.8,570.3 1268.4,569.9 1272.0,569.3 1275.5,569.0 1278.6,569.0 1281.6,568.0 1284.7,567.9 1287.8,567.4 1290.9,567.3 1293.9,567.0 1297.0,566.6 1300.9,567.5 1304.9,568.1 1308.8,568.3 1312.3,569.6 1315.9,570.5 1319.5,571.7 1323.0,573.0 1326.0,573.4 1329.1,573.0 1332.1,572.6 1335.1,572.6 1338.1,573.3 1341.2,572.8 1344.2,572.8 1347.2,572.8 1350.2,572.5 1353.3,572.5 1356.3,573.0 1359.7,572.9 1363.1,572.6 1366.5,573.0 1369.8,572.6 1373.2,573.4 1376.6,572.8 1380.0,573.0 1383.6,571.0 1387.2,570.2 1390.7,567.8 1394.3,566.6 1397.3,565.9 1400.4,566.1 1403.4,565.9 1406.4,565.3 1409.4,564.4 1412.5,564.1 1415.5,563.8 1418.5,563.9 1421.5,562.7 1424.6,562.5 1427.6,562.4 1431.0,562.1 1434.4,562.0 1437.8,561.7 1441.1,561.4 1444.5,560.7 1447.9,560.3 1451.3,560.0 1455.3,560.2 1459.2,560.5 1463.2,561.0 1467.1,566.1 1471.1,571.6 1475.0,576.6 1478.6,579.8 1482.2,582.6 1485.4,583.8 1488.5,583.8 1491.7,585.0 1495.3,584.1 1498.8,583.6 1502.4,583.5 1506.0,582.6 1509.3,582.4 1512.7,581.5 1516.0,581.1 1519.3,580.5 1522.7,579.3 1526.0,579.0" fill="none" stroke="#FF0000" stroke-width="2" stroke-linejoin="miter" stroke-miterlimit="2"/>
<polyline points="613.0,768.0 618.0,767.0 633.0,755.0 666.0,739.0 692.0,723.0 698.0,710.0 702.0,677.0 705.0,641.0 708.0,634.0 713.0,588.0 717.0,562.0 721.0,592.0 723.0,611.0 726.0,539.0 731.0,505.0 736.0,516.0 739.0,647.0 743.0,501.0 747.0,539.0 751.0,493.0 756.0,466.0 762.0,450.0 768.0,406.0 774.0,392.0 777.0,426.0 782.0,470.0 790.0,411.0 797.0,392.0 803.0,510.0 808.0,415.0 813.0,435.0 817.0,382.0 823.0,402.0 832.0,484.0 840.0,408.0 851.0,365.0 852.0,337.0 858.0,331.0 875.0,337.0 884.0,344.0 900.0,359.0 913.0,364.0 930.0,395.0 942.0,418.0 955.0,460.0 959.0,438.0 968.0,466.0 979.0,505.0 990.0,542.6 995.0,545.0 1000.0,562.6 1005.0,575.0 1008.0,585.0 1010.0,629.0 1013.0,636.0 1018.0,722.0 1025.0,724.0 1039.0,726.0 1046.0,719.0 1058.0,726.0 1070.0,741.0 1082.0,750.0 1091.0,757.0 1096.0,768.0" fill="none" stroke="#E0E040" stroke-width="2" stroke-linejoin="miter" stroke-miterlimit="2"/>
<path d="M634.5 720V767" stroke="#E0E040" stroke-width="2"/>
<polyline points="188.0,180.0 193.0,181.5 212.4,182.0 222.6,182.7 228.7,186.2 239.0,186.8 241.0,188.8 249.0,189.6 264.3,190.2 266.4,191.7 269.4,189.8 278.6,190.2 280.6,191.7 295.9,191.7 299.0,193.7 310.0,192.9 328.5,196.3 338.6,197.0 343.7,196.0 348.8,201.0 357.0,203.5 363.0,203.9 367.0,207.0 379.4,209.2 383.4,212.6 397.7,213.6 408.0,213.2 414.0,215.3 432.3,215.7 436.4,217.7 448.6,219.8 456.7,222.4 466.9,224.8 479.0,225.9 487.3,230.5 499.5,231.6 511.7,233.0 515.8,236.4 528.0,239.7 540.0,242.8 558.5,243.7 561.6,246.8 583.0,247.7 598.0,249.8 607.4,253.5 662.4,254.4 671.6,259.0 680.7,260.5 690.0,258.4 699.0,262.0 714.3,262.0 726.6,266.6 741.8,269.7 748.0,274.0 772.4,279.0 778.5,285.0 796.8,289.5 803.0,296.6 815.0,298.7 839.6,303.3 845.7,307.0 858.0,311.0 868.0,315.0 880.0,317.0 892.4,324.0 911.0,330.0 927.7,334.9 951.6,344.4 968.3,345.6 982.6,356.8 1008.8,359.9 1013.6,364.7 1047.0,364.7 1066.0,368.3 1080.4,374.2 1094.7,379.0 1109.0,390.2 1118.5,392.1 1132.8,396.4 1137.6,394.5 1161.5,400.5 1175.8,406.4 1190.0,410.9 1199.5,412.8 1211.4,420.4 1225.6,426.5 1237.5,432.2 1249.4,440.0 1259.0,444.0 1273.2,447.2 1285.0,453.2 1294.5,452.7 1306.4,460.3 1313.5,465.0 1330.2,477.0 1337.3,479.8 1351.6,482.1 1361.0,488.8 1373.0,491.2 1382.4,490.0 1389.6,493.5 1396.7,500.7 1418.0,501.9 1427.6,505.0 1441.8,507.3 1451.3,510.2 1470.3,513.7 1487.0,519.2 1494.0,524.4 1508.4,525.6 1522.6,532.0 1526.0,531.0" fill="none" stroke="#000000" stroke-width="2.5" stroke-linejoin="miter" stroke-miterlimit="2"/>
<path d="M1477 768V739h3v29zM1482 768V739h3v29zM1486 768V739h3v29zM1510 768V739h3v29z" fill="#0000FF"/>
<path d="M189 767.5H1526" stroke="#0000FF" stroke-width="1" stroke-dasharray="2 2"/></g>
<g><rect x="1" y="800" width="1676" height="84" fill="#006CDC"/>
<rect x="1676" y="800" width="1" height="84" fill="#A0A0A0"/>
<rect x="87" y="800" width="1" height="84" fill="#E8E4DC"/>
<rect x="204" y="800" width="1" height="84" fill="#E8E4DC"/>
<rect x="322" y="800" width="1" height="84" fill="#E8E4DC"/>
<rect x="440" y="800" width="1" height="84" fill="#E8E4DC"/>
<rect x="558" y="800" width="1" height="84" fill="#E8E4DC"/>
<rect x="676" y="800" width="1" height="84" fill="#E8E4DC"/>
<rect x="794" y="800" width="1" height="84" fill="#E8E4DC"/>
<rect x="912" y="800" width="1" height="84" fill="#E8E4DC"/>
<text x="8.5" y="818" fill="#000" font-weight="bold" letter-spacing="0.3">Sensor</text>
<text x="8.5" y="834" fill="#000" font-weight="bold" letter-spacing="0.3">MinWert</text>
<text x="8.5" y="850" fill="#000" font-weight="bold" letter-spacing="0.3">MaxWert</text>
<text x="8.5" y="866" fill="#000" font-weight="bold" letter-spacing="0.3">Durchschnitt</text>
<text x="8.5" y="882" fill="#000" font-weight="bold" letter-spacing="0.3">23.11. 23:58</text>
<text x="95" y="818" fill="#000" font-weight="bold" letter-spacing="0.3">Temperatur</text>
<text x="198.5" y="818" fill="#000" text-anchor="end" font-weight="bold" letter-spacing="0.3">°C</text>
<text x="100.5" y="834" fill="#000">07:44</text>
<text x="198.5" y="834" fill="#000" text-anchor="end">-6.7</text>
<text x="100.5" y="850" fill="#000">13:30</text>
<text x="198.5" y="850" fill="#000" text-anchor="end">1.1</text>
<text x="198.5" y="866" fill="#000" text-anchor="end">-3.11</text>
<text x="198.5" y="882" fill="#000" text-anchor="end" font-weight="bold" letter-spacing="0.3">-2.1</text>
<text x="213.5" y="818" fill="#000" font-weight="bold" letter-spacing="0.3">Temp. +5 cm</text>
<text x="316.5" y="818" fill="#000" text-anchor="end" font-weight="bold" letter-spacing="0.3">°C</text>
<text x="218.5" y="834" fill="#000">03:36</text>
<text x="316.5" y="834" fill="#000" text-anchor="end">-11.1</text>
<text x="218.5" y="850" fill="#000">12:08</text>
<text x="316.5" y="850" fill="#000" text-anchor="end">5.0</text>
<text x="316.5" y="866" fill="#000" text-anchor="end">-5.17</text>
<text x="316.5" y="882" fill="#000" text-anchor="end" font-weight="bold" letter-spacing="0.3">-2.8</text>
<text x="330" y="818" fill="#000" font-weight="bold" letter-spacing="0.3">Solarstrahlg</text>
<text x="434.5" y="818" fill="#000" text-anchor="end" font-weight="bold" letter-spacing="0.3">W/m²</text>
<text x="330.5" y="834" fill="#000">Elevation</text>
<text x="434.5" y="834" fill="#000" text-anchor="end">-58.742</text>
<text x="336.5" y="850" fill="#000">12:00</text>
<text x="434.5" y="850" fill="#000" text-anchor="end">304</text>
<text x="330.5" y="866" fill="#000">Tag:5:37 h</text>
<text x="434.5" y="866" fill="#000" text-anchor="end">152</text>
<text x="330.5" y="882" fill="#000">dunkel</text>
<text x="434.5" y="882" fill="#000" text-anchor="end" font-weight="bold" letter-spacing="0.3">0</text>
<text x="448" y="818" fill="#000" font-weight="bold" letter-spacing="0.3">Luftdruck</text>
<text x="552.5" y="818" fill="#000" text-anchor="end" font-weight="bold" letter-spacing="0.3">hPa</text>
<text x="454.5" y="834" fill="#000">23:56</text>
<text x="552.5" y="834" fill="#000" text-anchor="end">1003.7</text>
<text x="454.5" y="850" fill="#000">00:04</text>
<text x="552.5" y="850" fill="#000" text-anchor="end">1024.3</text>
<text x="448.5" y="866" fill="#000">^1.8hPa/h</text>
<text x="552.5" y="866" fill="#000" text-anchor="end">1015.7</text>
<text x="448.5" y="882" fill="#000">Schnee+ve</text>
<text x="552.5" y="882" fill="#00FF00" text-anchor="end" font-weight="bold" letter-spacing="0.3">1003.8</text>
<text x="566" y="818" fill="#000" font-weight="bold" letter-spacing="0.3">Windböen</text>
<text x="670.5" y="818" fill="#000" text-anchor="end" font-weight="bold" letter-spacing="0.3">km/h</text>
<text x="566.5" y="834" fill="#000">Ø 10 min.</text>
<text x="670.5" y="834" fill="#000" text-anchor="end">12.9</text>
<text x="572.5" y="850" fill="#000">20:36</text>
<text x="670.5" y="850" fill="#000" text-anchor="end">S 27.4</text>
<text x="572.5" y="866" fill="#000">199.6 km</text>
<text x="670.5" y="866" fill="#000" text-anchor="end">8.3</text>
<text x="572.5" y="882" fill="#000">3 Bft S-SW</text>
<text x="670.5" y="882" fill="#FF0000" text-anchor="end" font-weight="bold" letter-spacing="0.3">14.5</text>
<text x="684" y="818" fill="#000" font-weight="bold" letter-spacing="0.3">Regen</text>
<text x="788.5" y="818" fill="#000" text-anchor="end" font-weight="bold" letter-spacing="0.3">l/m²</text>
<text x="684.5" y="834" fill="#000">8 min.</text>
<text x="690.5" y="850" fill="#000">23:42</text>
<text x="788.5" y="850" fill="#000" text-anchor="end">0.2</text>
<text x="684.5" y="866" fill="#000">Gesamt:</text>
<text x="788.5" y="866" fill="#000" text-anchor="end">0.8</text>
<text x="687.5" y="882" fill="#000">0.8 l/m²</text>
<text x="788.5" y="882" fill="#000" text-anchor="end" font-weight="bold" letter-spacing="0.3">0.0</text>
<text x="802" y="818" fill="#000" font-weight="bold" letter-spacing="0.3">Zeit Sonne</text>
<text x="905.5" y="818" fill="#000" text-anchor="end" font-weight="bold" letter-spacing="0.3">min</text>
<text x="808.5" y="850" fill="#000">14:23</text>
<text x="905.5" y="850" fill="#000" text-anchor="end">3</text>
<text x="802.5" y="866" fill="#000">5:37 h</text>
<text x="905.5" y="866" fill="#000" text-anchor="end">0</text>
<text x="905.5" y="882" fill="#000" text-anchor="end" font-weight="bold" letter-spacing="0.3">0</text>
<rect x="504" y="872" width="8" height="12" fill="#FFFFFF"/>
<path d="M508 873V882M505 879L508 883L511 879" stroke="#000" stroke-width="1.6" fill="none"/>
<text x="920.5" y="818" fill="#000">Wolkenunterg</text>
<text x="1023" y="818" fill="#000" text-anchor="end">383m</text>
<text x="920.5" y="834" fill="#000">Sichtweite</text>
<text x="1023" y="834" fill="#000" text-anchor="end">2-5km</text>
<text x="920.5" y="850" fill="#000">Regen/Tag</text>
<text x="1023" y="850" fill="#000" text-anchor="end">0.8l/m²</text>
<text x="920.5" y="866" fill="#000">Neumond</text>
<text x="1023" y="866" fill="#000" text-anchor="end">20.12.25</text>
<text x="920.5" y="882" fill="#000">Vollmond</text>
<text x="1023" y="882" fill="#000" text-anchor="end">05.12.25</text>
<text x="10" y="797" fill="#000">08:26</text>
<text x="587" y="797" fill="#000">07:43</text>
<text x="826" y="797" fill="#000">11:18</text>
<text x="1058" y="797" fill="#000">16:10</text>
<text x="1189.5" y="797" fill="#000">17:49</text>
<path d="M39.5 797.5A4.75 6 0 0 1 49 797.5Z" fill="#FFFF00"/>
<circle cx="621" cy="794" r="3.6" fill="#FFFF00"/><circle cx="621" cy="794" r="5" fill="none" stroke="#FFFF60" stroke-width="1" stroke-dasharray="1 1.2"/>
<rect x="814" y="788" width="11" height="11" fill="#000080"/><circle cx="816.5" cy="790.5" r="2.5" fill="#FFFFFF"/><path d="M820 798V792M818 794L820 791L822 794" stroke="#FFFF00" stroke-width="1.6" fill="none"/>
<rect x="1088.5" y="791.5" width="5" height="5" fill="none" stroke="#FFFF00" stroke-width="1"/>
<rect x="1178" y="788" width="11" height="11" fill="#000080"/><circle cx="1186" cy="798" r="2.5" fill="#FFFFFF"/><path d="M1182 788V795M1180 793L1182 796L1184 793" stroke="#FFFF00" stroke-width="1.6" fill="none"/>
<rect x="619" y="769" width="2" height="6" fill="#FFFF00"/>
<rect x="1090" y="769" width="2" height="7" fill="#FFFF00"/>
<rect x="818" y="769" width="2" height="7" fill="#808080"/>
<rect x="1182" y="769" width="2" height="7" fill="#808080"/></g>
</svg></body></html>
